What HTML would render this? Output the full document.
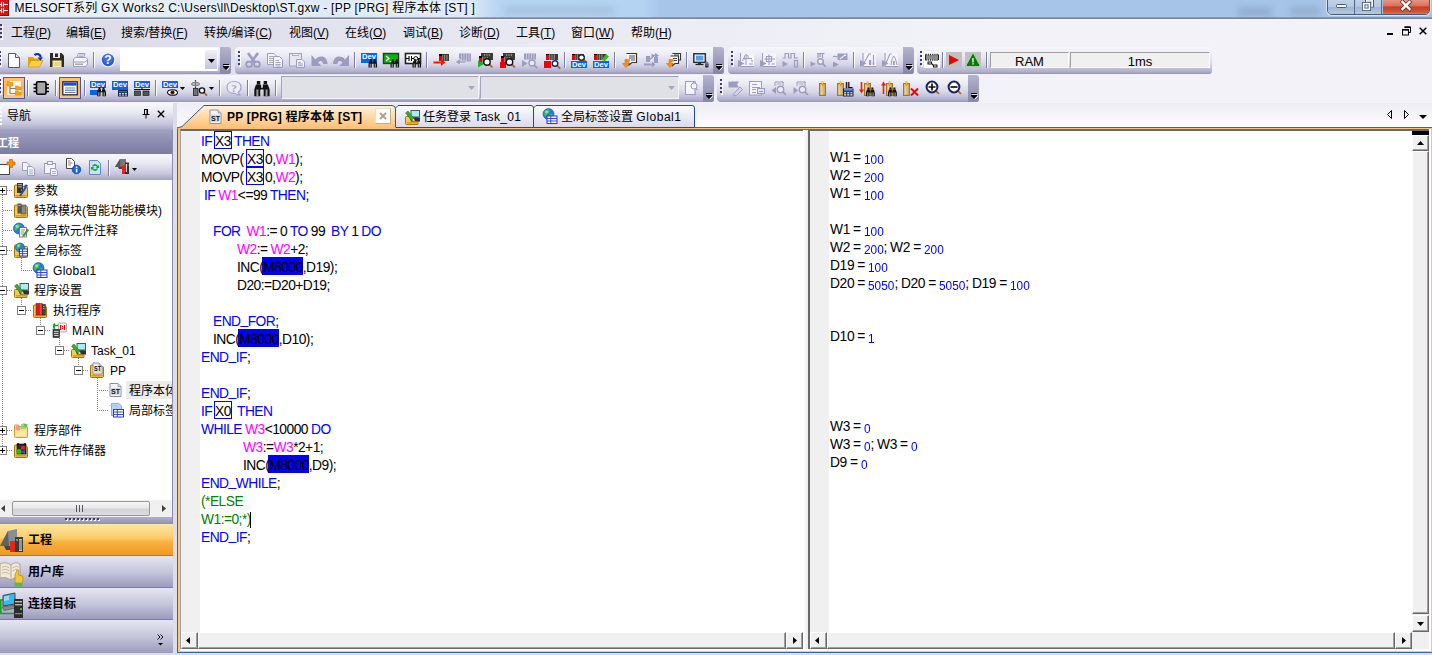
<!DOCTYPE html><html><head><meta charset="utf-8"><title>GX Works2</title><style>
*{box-sizing:border-box;margin:0;padding:0}
html,body{width:1432px;height:655px;overflow:hidden;background:#e9e9f1}
body{position:relative;font-family:"Liberation Sans","Noto Sans CJK SC",sans-serif;font-size:12px;color:#000}
.a{position:absolute}
svg{overflow:visible}
.t{position:absolute;white-space:nowrap;line-height:16px}
#title{left:0;top:0;width:1432px;height:18px;background:linear-gradient(90deg,#e6eef8 0,#dfeaf6 300px,#dce8f6 470px,#b6d4f4 500px,#b4d3f3 645px,#a6c5e9 660px,#a5c4e8 1432px)}
#titleline{left:0;top:17px;width:1432px;height:2px;background:linear-gradient(180deg,rgba(90,104,130,.25),#5e6a80)}
#menubar{left:0;top:19px;width:1432px;height:84px;background:linear-gradient(90deg,#dadae8 0,#e2e2ee 300px,#ededf5 700px,#f2f2f8 1000px,#f2f2f8 1432px)}
.menu{top:25px;font-size:12px}
.tb{position:absolute;height:27px;border-radius:0 3px 3px 0;background:linear-gradient(180deg,#f6f6fb 0,#ececf5 30%,#d4d4e6 65%,#aeaecb 92%,#9494b4 100%)}
.tb.r{border-radius:4px 3px 3px 4px}
.cap{position:absolute;top:0;bottom:0;right:0;width:11px;border-radius:0 3px 3px 0;background:linear-gradient(180deg,#b4b4ce 0,#9898b8 60%,#8686a8 100%)}
.sep{position:absolute;width:2px;height:16px;background:linear-gradient(90deg,#7c7ca4 0,#7c7ca4 50%,#fff 50%)}
.grip{position:absolute;width:2px;height:15px;background:repeating-linear-gradient(180deg,#3c3c6c 0,#3c3c6c 2px,transparent 2px,transparent 4px);box-shadow:1px 1px 0 #fff}
.code{position:absolute;white-space:pre;word-spacing:-0.3px;letter-spacing:-0.53px;font-size:13.8px;margin-top:-0.2px;line-height:18px;font-family:"Liberation Sans",sans-serif;height:18px}
.us{position:relative;top:-1.6px}.k{color:#0000ff}.v{color:#ff00ff}.g{color:#008000}
.sel{color:#000}
.mon{position:absolute;white-space:pre;word-spacing:-0.4px;letter-spacing:-0.36px;font-size:13.8px;line-height:18px;height:18px}
.mon b{font-weight:normal;color:#0000f0;display:inline-block;position:relative;top:2px;font-size:13.6px;letter-spacing:0;transform:scaleX(.87);transform-origin:0 50%}
.tree{position:absolute;white-space:nowrap;font-size:12px;line-height:16px}
.sb{position:absolute;background:#f0f0f0}
.btn{position:absolute;background:#f0f0f0;border:1px solid;border-color:#fff #696969 #696969 #fff;box-shadow:inset -1px -1px 0 #a0a0a0}
.combo{position:absolute;height:23px;background:#e0e0e7;border:1px solid;border-color:#a2a2c2 #f4f4fa #f4f4fa #a2a2c2}
.nb{position:absolute;left:0;width:173px;height:32px}
</style></head><body>
<div class="a" id="title"></div>
<div class="a" style="left:505px;top:6px;width:110px;height:9px;background:#9fb6d2;filter:blur(3px);opacity:.55"></div>
<div class="a" style="left:1238px;top:7px;width:34px;height:10px;background:#8ea6c6;filter:blur(3px);opacity:.7"></div>
<div class="a" style="left:1290px;top:6px;width:30px;height:10px;background:#8ea6c6;filter:blur(3px);opacity:.6"></div>
<div class="a" id="titleline"></div>
<div class="a" style="left:0;top:0;width:9px;height:16px;background:#d81414;border-right:1px solid #901010;border-bottom:1px solid #901010"></div>
<svg class="a" style="left:0px;top:0px" width="9" height="14" viewBox="0 0 9 14"><path d="M0,4.5 H1.5 M3.5,4.5 H8 M1.5,2 V7 M3.5,2 V7 M0,10.5 H1.5 M3.5,10.5 H8 M1.5,8 V13 M3.5,8 V13" stroke="#fff" stroke-width="1.1" fill="none"/></svg>
<div class="t" id="ttl" style="left:14.5px;top:0px;font-size:12px;line-height:17px;letter-spacing:0.26px;text-shadow:0 0 4px #fff,0 0 6px #fff">MELSOFT系列 GX Works2 C:\Users\ll\Desktop\ST.gxw - [PP [PRG] 程序本体 [ST] ]</div>
<div class="a" style="left:1327px;top:-4px;width:103px;height:19px;border:1px solid #4a5a74;border-radius:0 0 5px 5px;overflow:hidden;box-shadow:0 0 0 1px rgba(255,255,255,.55)"><div class="a" style="left:0;top:0;width:27px;height:18px;background:linear-gradient(180deg,#c4d6ec 0,#b4c8e2 55%,#9cb4d4 56%,#b8cce4 100%);border-right:1px solid #5a6a84"></div><div class="a" style="left:28px;top:0;width:26px;height:18px;background:linear-gradient(180deg,#c4d6ec 0,#b4c8e2 55%,#9cb4d4 56%,#b8cce4 100%);border-right:1px solid #5a6a84"></div><div class="a" style="left:55px;top:0;width:47px;height:18px;background:linear-gradient(180deg,#e8a898 0,#d8705c 50%,#c83c20 55%,#d05a38 85%,#e09070 100%)"></div></div>
<svg class="a" style="left:1336px;top:4px" width="11" height="4" viewBox="0 0 11 4"><rect x="0.5" y="0.5" width="10" height="3" rx="1" fill="#fff" stroke="#4c5870" stroke-width="1"/></svg>
<svg class="a" style="left:1362px;top:0px" width="12" height="12" viewBox="0 0 12 12"><rect x="3.5" y="-1" width="8" height="8" fill="none" stroke="#4c5870" stroke-width="1"/><rect x="4.5" y="0" width="6" height="6" fill="none" stroke="#fff" stroke-width="1"/><rect x="0.5" y="2.5" width="8" height="8" fill="#c0d0e4" stroke="#4c5870" stroke-width="1"/><rect x="1.5" y="3.5" width="6" height="6" fill="none" stroke="#fff" stroke-width="1.3"/><rect x="3" y="5" width="3" height="3" fill="#fff" stroke="#4c5870" stroke-width=".8"/></svg>
<svg class="a" style="left:1401px;top:1px" width="10" height="9" viewBox="0 0 10 9"><path d="M1.5,1 L8.5,8 M8.5,1 L1.5,8" stroke="#6a3a3a" stroke-width="4" stroke-linecap="square"/><path d="M1.5,1 L8.5,8 M8.5,1 L1.5,8" stroke="#fff" stroke-width="2.4" stroke-linecap="square"/></svg>
<div class="a" id="menubar"></div>
<div class="a" style="left:0;top:19px;width:1432px;height:1px;background:rgba(255,255,255,.45)"></div>
<div class="a" style="left:0;top:24px;width:2px;height:15px;background:repeating-linear-gradient(180deg,#3c3c6c 0,#3c3c6c 2px,transparent 2px,transparent 4px);box-shadow:1px 1px 0 #fff"></div>
<div class="t menu" style="left:11px">工程(<u>P</u>)</div>
<div class="t menu" style="left:66px">编辑(<u>E</u>)</div>
<div class="t menu" style="left:121px">搜索/替换(<u>F</u>)</div>
<div class="t menu" style="left:204px">转换/编译(<u>C</u>)</div>
<div class="t menu" style="left:289px">视图(<u>V</u>)</div>
<div class="t menu" style="left:345px">在线(<u>O</u>)</div>
<div class="t menu" style="left:403px">调试(<u>B</u>)</div>
<div class="t menu" style="left:459px">诊断(<u>D</u>)</div>
<div class="t menu" style="left:516px">工具(<u>T</u>)</div>
<div class="t menu" style="left:571px">窗口(<u>W</u>)</div>
<div class="t menu" style="left:631px">帮助(<u>H</u>)</div>
<svg class="a" style="left:1387px;top:26px" width="8" height="10" viewBox="0 0 8 10"><rect x="0" y="7" width="6" height="2" fill="#000"/></svg>
<svg class="a" style="left:1402px;top:26px" width="10" height="10" viewBox="0 0 10 10"><path d="M2.5,1 H8.5 V6.5 H7" fill="none" stroke="#000" stroke-width="1"/><rect x="2.5" y="0.5" width="6" height="1.5" fill="#000"/><rect x="0.5" y="3.5" width="6" height="5.5" fill="none" stroke="#000" stroke-width="1"/><rect x="0.5" y="3" width="6" height="1.6" fill="#000"/></svg>
<svg class="a" style="left:1419px;top:27px" width="8" height="8" viewBox="0 0 8 8"><path d="M0.7,0.7 L7.3,7.3 M7.3,0.7 L0.7,7.3" stroke="#000" stroke-width="1.5"/></svg>
<div class="tb" style="left:0px;top:47px;width:231px"><div class="cap"></div></div>
<svg class="a" style="left:223px;top:64px" width="7" height="7" viewBox="0 0 7 7"><rect x="0" y="0" width="6" height="1" fill="#000" shape-rendering="crispEdges"/><path d="M0,2 H6 V3 L3,6 L0,3 Z" fill="#000"/><path d="M3.7,6.2 L6.8,3.1" stroke="#fff" stroke-width="1"/><rect x="1" y="1" width="6" height="1" fill="#fff" opacity=".7" shape-rendering="crispEdges"/></svg>
<div class="grip" style="left:-1px;top:51px"></div>
<svg class="a" style="left:7px;top:52px" width="16" height="16" viewBox="0 0 16 16"><path d="M1.5,1.5 H8.5 L12.5,5.5 V15.5 H1.5 Z" fill="#fff" stroke="#5a5a5a"/><path d="M8.5,1.5 V5.5 H12.5" fill="#e8e8e8" stroke="#5a5a5a"/></svg>
<svg class="a" style="left:27px;top:52px" width="16" height="16" viewBox="0 0 16 16"><path d="M1,5 H6 L7,6.5 H12 V15 H1 Z" fill="#e8a000"/><path d="M1,15 L4,8.5 H16 L12.5,15 Z" fill="#ffd23c" stroke="#d08c00" stroke-width="0.6"/><path d="M7.5,3.2 C10,1 13.6,2 13.6,5.6" fill="none" stroke="#0032b4" stroke-width="2.2"/><path d="M10.6,5.4 H16 L13.4,8.8 Z" fill="#0032b4"/></svg>
<svg class="a" style="left:49px;top:52px" width="16" height="16" viewBox="0 0 16 16"><path d="M1,1 H12.5 L15,3.5 V15 H1 Z" fill="#2c2c24"/><rect x="4" y="1" width="7" height="5" fill="#e8e8e8"/><rect x="6" y="1.5" width="3" height="3.5" fill="#2c2c24"/><rect x="3.5" y="8.5" width="9" height="6.5" fill="#fff0a0"/><rect x="4.5" y="10.5" width="7" height="1" fill="#d4c060"/><rect x="4.5" y="12.5" width="7" height="1" fill="#d4c060"/></svg>
<svg class="a" style="left:72px;top:52px" width="16" height="16" viewBox="0 0 16 16"><path d="M4.5,6 L6.5,1.5 H13 L11.5,6" fill="#f4f4fa" stroke="#9c9cc0"/><path d="M1.5,7 L3.5,5.5 H13.5 L15.5,7 V12 L13.5,14.5 H1.5 Z" fill="#f4f4fa" stroke="#9c9cc0"/><path d="M1.5,10 H13 L15.5,8" fill="none" stroke="#9c9cc0"/><rect x="3" y="11.5" width="8" height="1.4" fill="#9c9cc0"/><line x1="7" y1="3" x2="11.5" y2="3" stroke="#9c9cc0" stroke-width=".8"/><line x1="6.5" y1="4.5" x2="11" y2="4.5" stroke="#9c9cc0" stroke-width=".8"/></svg>
<svg class="a" style="left:100px;top:52px" width="16" height="16" viewBox="0 0 16 16"><circle cx="8" cy="8" r="7.3" fill="#fff" opacity=".8"/><circle cx="8" cy="8" r="6.2" fill="#2a5cd0"/><circle cx="8" cy="6.5" r="5" fill="#4a7ce4" opacity=".6"/><text x="8" y="12.4" text-anchor="middle" font-family="Liberation Sans,sans-serif" font-weight="bold" font-size="12" fill="#fff">?</text></svg>
<div class="sep" style="left:93px;top:52px"></div>
<div class="a" style="left:120px;top:48px;width:98px;height:23px;background:#fff"></div>
<div class="a" style="left:205px;top:50px;width:12px;height:19px;background:linear-gradient(180deg,#f0f0f8,#c4c4dc)"></div>
<svg class="a" style="left:208px;top:59px" width="7" height="4" viewBox="0 0 7 4"><path d="M0,0 H7 L3.5,4 Z" fill="#000"/></svg>
<div class="tb r" style="left:235px;top:47px;width:489px"><div class="cap"></div></div>
<svg class="a" style="left:716px;top:64px" width="7" height="7" viewBox="0 0 7 7"><rect x="0" y="0" width="6" height="1" fill="#000" shape-rendering="crispEdges"/><path d="M0,2 H6 V3 L3,6 L0,3 Z" fill="#000"/><path d="M3.7,6.2 L6.8,3.1" stroke="#fff" stroke-width="1"/><rect x="1" y="1" width="6" height="1" fill="#fff" opacity=".7" shape-rendering="crispEdges"/></svg>
<div class="grip" style="left:238px;top:51px"></div>
<svg class="a" style="left:245px;top:52px" width="16" height="16" viewBox="0 0 16 16"><path d="M3,1 L10,10.5 M13,1 L6,10.5" stroke="#9c9cc0" stroke-width="2.6" fill="none"/><rect x="1.3" y="9.8" width="5.6" height="5" rx="2" fill="none" stroke="#9c9cc0" stroke-width="1.9"/><rect x="9.1" y="9.8" width="5.6" height="5" rx="2" fill="none" stroke="#9c9cc0" stroke-width="1.9"/></svg>
<svg class="a" style="left:267px;top:52px" width="16" height="16" viewBox="0 0 16 16"><path d="M0.5,1.5 H7 L10,4.5 V12.5 H0.5 Z" fill="#f4f4fa" stroke="#9c9cc0"/><path d="M2,4.5 H6 M2,6.5 H8 M2,8.5 H6 M2,10.5 H6" stroke="#9c9cc0" stroke-width=".9"/><path d="M6.5,4.5 H12.5 L15.5,7.5 V15.5 H6.5 Z" fill="#f4f4fa" stroke="#9c9cc0"/><path d="M8.5,8.5 H12 M8.5,10.5 H13.5 M8.5,12.5 H13.5 M8.5,14 H13.5" stroke="#9c9cc0" stroke-width=".9"/></svg>
<svg class="a" style="left:289px;top:52px" width="16" height="16" viewBox="0 0 16 16"><rect x="0.5" y="1.5" width="12" height="12.5" fill="#e6e6f0" stroke="#9c9cc0"/><rect x="3.5" y="1.5" width="6" height="2" fill="#f4f4fa" stroke="#9c9cc0" stroke-width=".8"/><path d="M7.5,7.5 H13 L15.5,10 V15.5 H7.5 Z" fill="#f4f4fa" stroke="#9c9cc0"/><path d="M9,10.5 H12 M9,12 H14 M9,13.7 H14" stroke="#9c9cc0" stroke-width=".9"/></svg>
<svg class="a" style="left:311px;top:52px" width="16" height="16" viewBox="0 0 16 16"><path d="M0.5,3 V14 H10.5 L7,10.8 C8.5,8 12,8.5 12,12 H16.5 C16.5,4 8.5,2.5 4.5,7.5 Z" fill="#9c9cc0"/></svg>
<svg class="a" style="left:333px;top:52px" width="16" height="16" viewBox="0 0 16 16"><path d="M16,3 V14 H6 L9.5,10.8 C8,8 4.5,8.5 4.5,12 H0 C0,4 8,2.5 12,7.5 Z" fill="#9c9cc0"/></svg>
<svg class="a" style="left:361px;top:52px" width="16" height="16" viewBox="0 0 16 16"><rect x="0" y="1" width="16" height="10" fill="#0a64e6" shape-rendering="crispEdges"/><text x="1" y="7.1" font-family="Liberation Sans,sans-serif" font-weight="bold" font-size="7.6" fill="#fff" textLength="14" lengthAdjust="spacingAndGlyphs">Dev</text><rect x="5" y="7" width="11" height="4" fill="#0a64e6" opacity="0"/><g transform="translate(7.5,7) scale(0.95)"><rect x="1.5" y="0" width="2" height="2" fill="#111"/><rect x="5.5" y="0" width="2" height="2" fill="#111"/><path d="M1,2 H4 V4 H5 V2 H8 L9,5 V9 H5.5 V5 H3.5 V9 H0 V5 Z" fill="#111"/><rect x="1.2" y="5" width="1.2" height="4" fill="#9a9a9a"/><rect x="6.6" y="5" width="1.2" height="4" fill="#9a9a9a"/></g></svg>
<svg class="a" style="left:383px;top:52px" width="16" height="16" viewBox="0 0 16 16"><rect x="0.5" y="1.5" width="15" height="10" fill="#10b010" stroke="#333" stroke-width="1.4"/><path d="M3,4 L6,6.5 L3,9 M6.5,9.5 H10" stroke="#fff" stroke-width="1.2" fill="none"/><g transform="translate(7.5,7) scale(0.95)"><rect x="1.5" y="0" width="2" height="2" fill="#111"/><rect x="5.5" y="0" width="2" height="2" fill="#111"/><path d="M1,2 H4 V4 H5 V2 H8 L9,5 V9 H5.5 V5 H3.5 V9 H0 V5 Z" fill="#111"/><rect x="1.2" y="5" width="1.2" height="4" fill="#9a9a9a"/><rect x="6.6" y="5" width="1.2" height="4" fill="#9a9a9a"/></g></svg>
<svg class="a" style="left:405px;top:52px" width="16" height="16" viewBox="0 0 16 16"><rect x="0.5" y="1.5" width="15" height="10" fill="#fff" stroke="#222" stroke-width="1.6"/><path d="M1,6.5 H4 M4,4 V9 M6.5,4 V9 M6.5,6.5 H9 M12.5,6.5 H15" stroke="#000" stroke-width="1.1"/><circle cx="10.8" cy="6.5" r="1.9" fill="#fff" stroke="#000"/><g transform="translate(7.5,7) scale(0.95)"><rect x="1.5" y="0" width="2" height="2" fill="#111"/><rect x="5.5" y="0" width="2" height="2" fill="#111"/><path d="M1,2 H4 V4 H5 V2 H8 L9,5 V9 H5.5 V5 H3.5 V9 H0 V5 Z" fill="#111"/><rect x="1.2" y="5" width="1.2" height="4" fill="#9a9a9a"/><rect x="6.6" y="5" width="1.2" height="4" fill="#9a9a9a"/></g></svg>
<svg class="a" style="left:433px;top:52px" width="16" height="16" viewBox="0 0 16 16"><rect x="5.5" y="2" width="10.5" height="6.5" fill="#3c3c34" shape-rendering="crispEdges"/><rect x="8.5" y="3" width="1.2" height="5.5" fill="#8a8a78"/><rect x="10.9" y="3" width="1.2" height="5.5" fill="#8a8a78"/><rect x="13.3" y="3" width="1.2" height="5.5" fill="#8a8a78"/><rect x="5.5" y="2" width="3" height="1.6" fill="#000" shape-rendering="crispEdges"/><rect x="5.5" y="3.6" width="3" height="4.9" fill="#e60000" shape-rendering="crispEdges"/><path d="M0.5,9.5 H8 V7 L12.5,10.5 L8,14 V11.5 H0.5 Z" fill="#f01800"/></svg>
<svg class="a" style="left:455px;top:52px" width="16" height="16" viewBox="0 0 16 16"><rect x="4" y="1.5" width="12" height="8" fill="#9c9cc0"/><path d="M6.5,2 V9 M9,2 V9 M11.5,2 V9 M14,2 V9" stroke="#c4c4dc" stroke-width="1"/><path d="M11,9 H5 V6.5 L0.5,10 L5,13.5 V11 H11 Z" fill="#9c9cc0" stroke="#f4f4fa" stroke-width=".5"/></svg>
<svg class="a" style="left:477px;top:52px" width="16" height="16" viewBox="0 0 16 16"><rect x="4" y="1" width="12" height="7" fill="#3c3c34" shape-rendering="crispEdges"/><rect x="7.0" y="2" width="1.2" height="6" fill="#8a8a78"/><rect x="9.4" y="2" width="1.2" height="6" fill="#8a8a78"/><rect x="11.8" y="2" width="1.2" height="6" fill="#8a8a78"/><rect x="2" y="4" width="11" height="7" fill="#3c3c34" shape-rendering="crispEdges"/><rect x="5.0" y="5" width="1.2" height="6" fill="#8a8a78"/><rect x="7.4" y="5" width="1.2" height="6" fill="#8a8a78"/><rect x="9.8" y="5" width="1.2" height="6" fill="#8a8a78"/><rect x="2" y="4" width="3" height="1.6" fill="#000" shape-rendering="crispEdges"/><rect x="2" y="5.6" width="3" height="5.4" fill="#e60000" shape-rendering="crispEdges"/><path d="M1,8.5 L7.5,11.8 L1,15.5 Z" fill="#10b820"/><line x1="12.24" y1="12.24" x2="15.440000000000001" y2="15.440000000000001" stroke="#b46428" stroke-width="1.8"/><circle cx="10" cy="10" r="3.2" fill="#fff" stroke="#111" stroke-width="1.4"/></svg>
<svg class="a" style="left:499px;top:52px" width="16" height="16" viewBox="0 0 16 16"><rect x="4" y="1" width="12" height="7" fill="#3c3c34" shape-rendering="crispEdges"/><rect x="7.0" y="2" width="1.2" height="6" fill="#8a8a78"/><rect x="9.4" y="2" width="1.2" height="6" fill="#8a8a78"/><rect x="11.8" y="2" width="1.2" height="6" fill="#8a8a78"/><rect x="2" y="4" width="11" height="7" fill="#3c3c34" shape-rendering="crispEdges"/><rect x="5.0" y="5" width="1.2" height="6" fill="#8a8a78"/><rect x="7.4" y="5" width="1.2" height="6" fill="#8a8a78"/><rect x="9.8" y="5" width="1.2" height="6" fill="#8a8a78"/><rect x="2" y="4" width="3" height="1.6" fill="#000" shape-rendering="crispEdges"/><rect x="2" y="5.6" width="3" height="5.4" fill="#e60000" shape-rendering="crispEdges"/><rect x="1" y="9.5" width="6" height="6" fill="#f00000" shape-rendering="crispEdges"/><line x1="12.74" y1="12.24" x2="15.940000000000001" y2="15.440000000000001" stroke="#b46428" stroke-width="1.8"/><circle cx="10.5" cy="10" r="3.2" fill="#fff" stroke="#111" stroke-width="1.4"/></svg>
<svg class="a" style="left:521px;top:52px" width="16" height="16" viewBox="0 0 16 16"><rect x="3" y="1.5" width="12" height="6" fill="#9c9cc0"/><path d="M5.5,2 V7 M8,2 V7 M10.5,2 V7 M13,2 V7" stroke="#c8c8e0" stroke-width="1"/><path d="M1,8 L6.5,11.5 L1,15 Z" fill="#9c9cc0"/><line x1="13.1" y1="13.1" x2="16.3" y2="16.3" stroke="#9c9cc0" stroke-width="1.8"/><circle cx="11" cy="11" r="3" fill="#ececf4" stroke="#9c9cc0" stroke-width="1.4"/></svg>
<svg class="a" style="left:543px;top:52px" width="16" height="16" viewBox="0 0 16 16"><rect x="3" y="1.5" width="12" height="6.5" fill="#3c3c34" shape-rendering="crispEdges"/><rect x="6.0" y="2.5" width="1.2" height="5.5" fill="#8a8a78"/><rect x="8.4" y="2.5" width="1.2" height="5.5" fill="#8a8a78"/><rect x="10.8" y="2.5" width="1.2" height="5.5" fill="#8a8a78"/><rect x="3" y="1.5" width="3" height="1.6" fill="#000" shape-rendering="crispEdges"/><rect x="3" y="3.1" width="3" height="4.9" fill="#e60000" shape-rendering="crispEdges"/><rect x="1" y="9" width="6.5" height="6.5" fill="#f00000" shape-rendering="crispEdges"/><line x1="13.959999999999999" y1="13.459999999999999" x2="17.16" y2="16.66" stroke="#b46428" stroke-width="1.8"/><circle cx="12" cy="11.5" r="2.8" fill="#fff" stroke="#1c2a6c" stroke-width="1.4"/></svg>
<svg class="a" style="left:571px;top:52px" width="16" height="16" viewBox="0 0 16 16"><rect x="0.5" y="1.5" width="12" height="6.5" fill="#3c3c34" shape-rendering="crispEdges"/><rect x="3.5" y="2.5" width="1.2" height="5.5" fill="#8a8a78"/><rect x="5.9" y="2.5" width="1.2" height="5.5" fill="#8a8a78"/><rect x="8.3" y="2.5" width="1.2" height="5.5" fill="#8a8a78"/><rect x="0.5" y="1.5" width="3" height="1.6" fill="#000" shape-rendering="crispEdges"/><rect x="0.5" y="3.1" width="3" height="4.9" fill="#e60000" shape-rendering="crispEdges"/><line x1="12.459999999999999" y1="7.46" x2="15.66" y2="10.66" stroke="#b46428" stroke-width="1.8"/><circle cx="10.5" cy="5.5" r="2.8" fill="#fff" stroke="#222" stroke-width="1.4"/><rect x="0" y="9" width="16" height="7" fill="#0a64e6" shape-rendering="crispEdges"/><text x="1" y="15.1" font-family="Liberation Sans,sans-serif" font-weight="bold" font-size="7.6" fill="#fff" textLength="14" lengthAdjust="spacingAndGlyphs">Dev</text></svg>
<svg class="a" style="left:593px;top:52px" width="16" height="16" viewBox="0 0 16 16"><rect x="0.5" y="1.5" width="12" height="6.5" fill="#3c3c34" shape-rendering="crispEdges"/><rect x="3.5" y="2.5" width="1.2" height="5.5" fill="#8a8a78"/><rect x="5.9" y="2.5" width="1.2" height="5.5" fill="#8a8a78"/><rect x="8.3" y="2.5" width="1.2" height="5.5" fill="#8a8a78"/><rect x="0.5" y="1.5" width="3" height="1.6" fill="#000" shape-rendering="crispEdges"/><rect x="0.5" y="3.1" width="3" height="4.9" fill="#e60000" shape-rendering="crispEdges"/><path d="M9,7.5 L13,2 L16,4.5 L11.5,9.5 Z" fill="#30c020"/><path d="M9,7.5 L11.5,9.5 L8.5,10 Z" fill="#e8c040"/><rect x="0" y="9" width="16" height="7" fill="#0a64e6" shape-rendering="crispEdges"/><text x="1" y="15.1" font-family="Liberation Sans,sans-serif" font-weight="bold" font-size="7.6" fill="#fff" textLength="14" lengthAdjust="spacingAndGlyphs">Dev</text></svg>
<svg class="a" style="left:621px;top:52px" width="16" height="16" viewBox="0 0 16 16"><path d="M5.5,1.5 H15.5 V10.5 H11 L8,13 V10.5" fill="#fff" stroke="#333" stroke-width="1.2"/><path d="M8,4 H14 M8,6 H14 M10,8 H14" stroke="#333" stroke-width=".9"/><path d="M8.5,7.5 H4 V11.5 H1.5 L5,15.5 L8.5,11.5 H6 V9.5 H8.5 Z" fill="#ff8c00" stroke="#e06000" stroke-width=".5"/></svg>
<svg class="a" style="left:643px;top:52px" width="16" height="16" viewBox="0 0 16 16"><rect x="3" y="4" width="4" height="6" fill="#9c9cc0"/><rect x="11" y="5" width="4" height="6" fill="#9c9cc0"/><path d="M8.5,1.5 L12,3.5 L8.5,6 Z M12,1 L16,3.5 L12,6 Z" fill="#9c9cc0"/><path d="M5,9 L12,3" stroke="#9c9cc0" stroke-width="1.2"/><path d="M1,11.5 H9 V9.5 L12.5,12.5 L9,15.5 V13.5 H1 Z" fill="#9c9cc0"/></svg>
<svg class="a" style="left:665px;top:52px" width="16" height="16" viewBox="0 0 16 16"><path d="M7.5,1.5 H15.5 V8 H14" fill="#fff" stroke="#333" stroke-width="1.1"/><path d="M5.5,4 H13.5 V11.5 H10 L7.5,13.5 V11.5" fill="#fff" stroke="#333" stroke-width="1.1"/><path d="M9,3 H14 M8,6.5 H12 M9,8.5 H12" stroke="#333" stroke-width=".9"/><path d="M8.5,7.5 H4 V11.5 H1.5 L5,15.5 L8.5,11.5 H6 V9.5 H8.5 Z" fill="#ff8c00" stroke="#e06000" stroke-width=".5"/></svg>
<svg class="a" style="left:693px;top:52px" width="16" height="16" viewBox="0 0 16 16"><rect x="0.8" y="1.8" width="11.5" height="8.5" fill="#fff" stroke="#333" stroke-width="1.5"/><rect x="2.8" y="3.6" width="7.5" height="5" fill="#4aa0ff"/><rect x="5" y="10.5" width="3" height="1.5" fill="#333"/><rect x="2.5" y="11.8" width="8" height="1.3" fill="#222"/><path d="M12,11.5 H15.5 V15 Q13.7,16.3 12,15 Z" fill="#333"/><path d="M12.8,11.5 V10.5 Q13.7,9.3 14.7,10.5 V11.5" fill="none" stroke="#555" stroke-width=".9"/><rect x="12" y="12.6" width="3.5" height=".8" fill="#999"/></svg>
<div class="sep" style="left:354px;top:52px"></div>
<div class="sep" style="left:426px;top:52px"></div>
<div class="sep" style="left:564px;top:52px"></div>
<div class="sep" style="left:614px;top:52px"></div>
<div class="sep" style="left:686px;top:52px"></div>
<div class="tb r" style="left:728px;top:47px;width:186px"><div class="cap"></div></div>
<svg class="a" style="left:906px;top:64px" width="7" height="7" viewBox="0 0 7 7"><rect x="0" y="0" width="6" height="1" fill="#000" shape-rendering="crispEdges"/><path d="M0,2 H6 V3 L3,6 L0,3 Z" fill="#000"/><path d="M3.7,6.2 L6.8,3.1" stroke="#fff" stroke-width="1"/><rect x="1" y="1" width="6" height="1" fill="#fff" opacity=".7" shape-rendering="crispEdges"/></svg>
<div class="grip" style="left:731px;top:51px"></div>
<svg class="a" style="left:738px;top:52px" width="16" height="16" viewBox="0 0 16 16"><rect x="2.5" y="1" width="13.5" height="14" fill="#f6f4f8"/><path d="M2.5,1 V15 M2.5,14.5 H16" stroke="#9c9cc0" stroke-width="1.1" fill="none"/><path d="M4,8 Q5.5,9 6.5,7 M8,2.5 V13 M5,6.5 H14 M8,2.5 Q10.5,3 10.5,6.5 M8,2.5 Q6,3 6,6.5 M13,8 Q15,8 14,10 M11,12 H15" stroke="#9c9cc0" stroke-width="1" fill="none"/><path d="M0,8 L6.5,11.5 L0,15 Z" fill="#9c9cc0"/></svg>
<svg class="a" style="left:760px;top:52px" width="16" height="16" viewBox="0 0 16 16"><rect x="2.5" y="1" width="13.5" height="14" fill="#f6f4f8"/><path d="M2.5,1 V15 M2.5,14.5 H16" stroke="#9c9cc0" stroke-width="1.1" fill="none"/><path d="M9,2.5 V13 M4.5,7 H15 M6.5,4.5 H11.5 V9.5 H6.5 Z M11.5,12 H15" stroke="#9c9cc0" stroke-width="1.1" fill="none"/><path d="M0,8 L6.5,11.5 L0,15 Z" fill="#9c9cc0"/></svg>
<svg class="a" style="left:782px;top:52px" width="16" height="16" viewBox="0 0 16 16"><path d="M0.5,6 H3 V1.5 H6.5 V6 H9 V1.5 H12.5 V6 H16" stroke="#9c9cc0" stroke-width="1.2" fill="none"/><rect x="12.5" y="8.5" width="3" height="6.5" fill="none" stroke="#9c9cc0" stroke-width="1.2"/><path d="M0.5,9 L6,12 L0.5,15 Z" fill="#9c9cc0"/></svg>
<svg class="a" style="left:810px;top:52px" width="16" height="16" viewBox="0 0 16 16"><path d="M7,1.5 H14.5 M8,1.5 V6 M12.5,1.5 V6 M10,2 V5" stroke="#9c9cc0" stroke-width="1.2"/><line x1="12.459999999999999" y1="11.459999999999999" x2="15.66" y2="14.66" stroke="#9c9cc0" stroke-width="1.8"/><circle cx="10.5" cy="9.5" r="2.8" fill="#ececf4" stroke="#9c9cc0" stroke-width="1.4"/><path d="M0.5,9.5 L6,12 L0.5,14.5 Z" fill="#9c9cc0"/></svg>
<svg class="a" style="left:832px;top:52px" width="16" height="16" viewBox="0 0 16 16"><rect x="5.5" y="1.5" width="10" height="6.5" fill="#9c9cc0"/><path d="M8,7 L13,3" stroke="#e8e8f4" stroke-width="1.2"/><rect x="12.5" y="2.5" width="1.3" height="1.6" fill="#fff"/><path d="M1,4.5 H5.5" stroke="#9c9cc0" stroke-width="1.2"/><path d="M1,9.5 L7,12.5 L1,15.5 Z" fill="#9c9cc0"/></svg>
<svg class="a" style="left:860px;top:52px" width="16" height="16" viewBox="0 0 16 16"><rect x="2.5" y="1" width="13.5" height="14" fill="#f6f4f8"/><path d="M3,1 V15 M3,14.5 H16" stroke="#9c9cc0" stroke-width="1.1" fill="none"/><path d="M4,11 L9,2 H11 M13.5,3 V12" stroke="#9c9cc0" stroke-width="1.1" fill="none"/><rect x="9" y="8" width="2.2" height="5" fill="#9c9cc0"/><rect x="12.7" y="10" width="1.6" height="3" fill="#9c9cc0"/><path d="M0,8 L6.5,11.5 L0,15 Z" fill="#9c9cc0"/></svg>
<svg class="a" style="left:882px;top:52px" width="16" height="16" viewBox="0 0 16 16"><rect x="2.5" y="1" width="13.5" height="14" fill="#f6f4f8"/><path d="M3,1 V15 M3,14.5 H16" stroke="#9c9cc0" stroke-width="1.1" fill="none"/><path d="M4,11 L8,2 H9.5 M9,13 Q11.5,-4 15,13" stroke="#9c9cc0" stroke-width="1.1" fill="none"/><rect x="11" y="9" width="1.8" height="4" fill="#9c9cc0"/><path d="M0,8 L6.5,11.5 L0,15 Z" fill="#9c9cc0"/></svg>
<div class="sep" style="left:803px;top:52px"></div>
<div class="sep" style="left:853px;top:52px"></div>
<div class="tb r" style="left:917px;top:47px;width:295px"></div>
<div class="grip" style="left:920px;top:51px"></div>
<svg class="a" style="left:924px;top:52px" width="16" height="16" viewBox="0 0 16 16"><rect x="0" y="0" width="16" height="16" fill="#fff" shape-rendering="crispEdges"/><rect x="2" y="3" width="12" height="4.5" fill="#8c8c8c"/><path d="M1.5,2.5 H14.5 M1.5,8 H14.5" stroke="#222" stroke-width="1.4" stroke-dasharray="1.2,1"/><path d="M1.5,2.5 V8 M14.5,2.5 V8" stroke="#222" stroke-width="1"/><rect x="4" y="10" width="3.5" height="2" fill="none" stroke="#111" stroke-width="1"/><rect x="9.5" y="13" width="3.5" height="2" fill="none" stroke="#111" stroke-width="1"/><path d="M7.5,11 L9.5,14" stroke="#111"/></svg>
<svg class="a" style="left:946px;top:52px" width="16" height="16" viewBox="0 0 16 16"><rect x="0" y="0" width="16" height="16" fill="#c0c0c0" shape-rendering="crispEdges"/><path d="M3,3 L13,8 L3,13 Z" fill="#f00000"/></svg>
<svg class="a" style="left:965px;top:52px" width="16" height="16" viewBox="0 0 16 16"><rect x="0" y="0" width="16" height="16" fill="#c0c0c0" shape-rendering="crispEdges"/><path d="M8,2.5 L14,13.5 H2 Z" fill="#008000" stroke="#008000" stroke-linejoin="round"/><rect x="7.3" y="6" width="1.4" height="4.5" fill="#e8ffe8"/><rect x="7.3" y="11.2" width="1.4" height="1.3" fill="#e8ffe8"/></svg>
<div class="sep" style="left:942px;top:52px"></div>
<div class="sep" style="left:986px;top:52px"></div>
<div class="a" style="left:990px;top:52px;width:79px;height:16px;background:#f0f0f0;border:1px solid;border-color:#a0a0a0 #fff #fff #a0a0a0;text-align:center;font-size:13px;line-height:17px">RAM</div>
<div class="a" style="left:1070px;top:52px;width:140px;height:16px;background:#f0f0f0;border:1px solid;border-color:#a0a0a0 #fff #fff #a0a0a0;text-align:center;font-size:13px;line-height:17px">1ms</div>
<div class="tb" style="left:0px;top:75px;width:714px"><div class="cap"></div></div>
<svg class="a" style="left:706px;top:93px" width="7" height="7" viewBox="0 0 7 7"><rect x="0" y="0" width="6" height="1" fill="#000" shape-rendering="crispEdges"/><path d="M0,2 H6 V3 L3,6 L0,3 Z" fill="#000"/><path d="M3.7,6.2 L6.8,3.1" stroke="#fff" stroke-width="1"/><rect x="1" y="1" width="6" height="1" fill="#fff" opacity=".7" shape-rendering="crispEdges"/></svg>
<div class="grip" style="left:-1px;top:79px"></div>
<div class="a" style="left:3px;top:77px;width:22px;height:22px;background:linear-gradient(180deg,#ffc478,#ffb050 50%,#ffc880);border:1px solid #4a5a9c"></div>
<div class="a" style="left:59px;top:77px;width:22px;height:22px;background:linear-gradient(180deg,#ffc478,#ffb050 50%,#ffc880);border:1px solid #4a5a9c"></div>
<svg class="a" style="left:6px;top:80px" width="16" height="16" viewBox="0 0 16 16"><rect x="1" y="1" width="14" height="14" fill="#fff" opacity=".85"/><path d="M4,5 V13.5 H10 M4,8.5 H10" stroke="#808080" stroke-width="1.2" fill="none"/><path d="M1,2.5 V1.5 H3.5 L4.5,2.5 H7 V6 H1 Z" fill="#f0a818" stroke="#c88000" stroke-width=".5"/><path d="M9.5,7 V6 H12 L13,7 H15 V10 H9.5 Z" fill="#f0a818" stroke="#c88000" stroke-width=".5"/><path d="M9.5,12 V11 H12 L13,12 H15 V15 H9.5 Z" fill="#f0a818" stroke="#c88000" stroke-width=".5"/></svg>
<svg class="a" style="left:33px;top:80px" width="16" height="16" viewBox="0 0 16 16"><path d="M0.5,4.5 H16 M0.5,8 H16 M0.5,11.5 H16" stroke="#000" stroke-width="1.7"/><rect x="3.5" y="1.8" width="9.5" height="12.5" rx="1.5" fill="#a8a8a8" stroke="#000" stroke-width="1.6"/></svg>
<svg class="a" style="left:62px;top:80px" width="16" height="16" viewBox="0 0 16 16"><rect x="0.8" y="1.8" width="14.5" height="13" fill="#fff" stroke="#1c2c5c" stroke-width="1.3"/><rect x="1.5" y="2.5" width="13" height="3.2" fill="#1c50d8"/><path d="M3,8 H13.5 M3,12.5 H13.5" stroke="#808080" stroke-width="1"/><path d="M3,10.2 H13.5" stroke="#2860e8" stroke-width="1"/></svg>
<svg class="a" style="left:90px;top:80px" width="16" height="16" viewBox="0 0 16 16"><rect x="0" y="1" width="16" height="6.5" fill="#0a64e6" shape-rendering="crispEdges"/><text x="1" y="6.6" font-family="Liberation Sans,sans-serif" font-weight="bold" font-size="7.6" fill="#fff" textLength="14" lengthAdjust="spacingAndGlyphs">Dev</text><rect x="0" y="10" width="8" height="5" fill="#0a64e6" shape-rendering="crispEdges"/><path d="M5,10 L7.5,12.5 L5,15 H8 V10Z" fill="#fff" opacity=".0"/><g transform="translate(7,7.2) scale(1.0)"><rect x="1.5" y="0" width="2" height="2" fill="#111"/><rect x="5.5" y="0" width="2" height="2" fill="#111"/><path d="M1,2 H4 V4 H5 V2 H8 L9,5 V9 H5.5 V5 H3.5 V9 H0 V5 Z" fill="#111"/><rect x="1.2" y="5" width="1.2" height="4" fill="#9a9a9a"/><rect x="6.6" y="5" width="1.2" height="4" fill="#9a9a9a"/></g></svg>
<svg class="a" style="left:112px;top:80px" width="16" height="16" viewBox="0 0 16 16"><rect x="0" y="1" width="16" height="8.5" fill="#0a64e6" shape-rendering="crispEdges"/><text x="1" y="7.1" font-family="Liberation Sans,sans-serif" font-weight="bold" font-size="7.6" fill="#fff" textLength="14" lengthAdjust="spacingAndGlyphs">Dev</text><rect x="6.5" y="10.5" width="9" height="5.5" fill="#fff" stroke="#1c2440" stroke-width="1"/><rect x="7" y="11" width="8" height="1.6" fill="#2a6cf0" shape-rendering="crispEdges"/><path d="M9.5,12.6 V16 M12.5,12.6 V16 M6.5,14.3 H15.5 M6.5,12.6 H15.5" stroke="#1c2440" stroke-width=".8"/></svg>
<svg class="a" style="left:134px;top:80px" width="16" height="16" viewBox="0 0 16 16"><rect x="0" y="1" width="16" height="6.5" fill="#0a64e6" shape-rendering="crispEdges"/><text x="1" y="6.6" font-family="Liberation Sans,sans-serif" font-weight="bold" font-size="7.6" fill="#fff" textLength="14" lengthAdjust="spacingAndGlyphs">Dev</text><path d="M8,7.5 V9.5 M0,9.5 H16" stroke="#111" stroke-width="1.1"/><rect x="0.5" y="11" width="6" height="4.5" fill="#555" stroke="#222" stroke-width=".7"/><rect x="9" y="11" width="6" height="4.5" fill="#555" stroke="#222" stroke-width=".7"/></svg>
<svg class="a" style="left:162px;top:80px" width="16" height="16" viewBox="0 0 16 16"><rect x="0" y="1" width="16" height="6.5" fill="#0a64e6" shape-rendering="crispEdges"/><text x="1" y="6.6" font-family="Liberation Sans,sans-serif" font-weight="bold" font-size="7.6" fill="#fff" textLength="14" lengthAdjust="spacingAndGlyphs">Dev</text><ellipse cx="10.5" cy="12.5" rx="5" ry="2.8" fill="#fff" stroke="#111" stroke-width="1.1"/><circle cx="10.5" cy="12.5" r="2.1" fill="#6c1400"/><circle cx="10.5" cy="12.5" r=".9" fill="#000"/></svg>
<svg class="a" style="left:191px;top:80px" width="16" height="16" viewBox="0 0 16 16"><ellipse cx="4.5" cy="4" rx="4" ry="1.8" fill="none" stroke="#666" stroke-width=".8"/><path d="M4.5,0.5 V8 M0.5,4 H8.5" stroke="#666" stroke-width=".8"/><circle cx="4.5" cy="0.8" r=".7" fill="#800080"/><circle cx="4.5" cy="7.5" r=".7" fill="#800080"/><rect x="2.5" y="8.5" width="4.5" height="7" fill="#70706c" stroke="#222" stroke-width=".8"/><line x1="12.82" y1="12.32" x2="16.02" y2="15.52" stroke="#b46428" stroke-width="1.8"/><circle cx="11" cy="10.5" r="2.6" fill="#fff" stroke="#111" stroke-width="1.4"/></svg>
<svg class="a" style="left:226px;top:80px" width="16" height="16" viewBox="0 0 16 16"><path d="M8,1.5 C12.5,1.5 15,4 15,7.5 C15,10 13.5,11.5 12,12.3 C12.5,13.5 13.5,14.5 14,15 C11.5,15 10,14.3 9,13.3 C4,13.8 1,11 1,7.5 C1,4 3.5,1.5 8,1.5 Z" fill="#ececf6" stroke="#a4a4c6" stroke-width="1.2"/><text x="8" y="11.6" text-anchor="middle" font-family="Liberation Serif,serif" font-weight="bold" font-size="11" fill="#a0a0c4">?</text></svg>
<svg class="a" style="left:254px;top:80px" width="16" height="16" viewBox="0 0 16 16"><g transform="translate(0.3,1) scale(1.7)"><rect x="1.5" y="0" width="2" height="2" fill="#111"/><rect x="5.5" y="0" width="2" height="2" fill="#111"/><path d="M1,2 H4 V4 H5 V2 H8 L9,5 V9 H5.5 V5 H3.5 V9 H0 V5 Z" fill="#111"/><rect x="1.2" y="5" width="1.2" height="4" fill="#9a9a9a"/><rect x="6.6" y="5" width="1.2" height="4" fill="#9a9a9a"/></g></svg>
<svg class="a" style="left:685px;top:80px" width="16" height="16" viewBox="0 0 16 16"><path d="M0.5,1.5 H10 V6 M0.5,1.5 V14.5 H10 V11" fill="#f4f4fa" stroke="#9c9cc0"/><rect x="0.5" y="1.5" width="9.5" height="13" fill="#f4f4fa" stroke="#9c9cc0"/><circle cx="9" cy="6" r="3" fill="#f4f4fa" stroke="#9c9cc0" stroke-width="1"/><path d="M11,8.5 L12.5,10" stroke="#9c9cc0" stroke-width="1.2"/><path d="M8.5,2 V3" stroke="#9c9cc0"/></svg>
<div class="sep" style="left:27px;top:80px"></div>
<div class="sep" style="left:55px;top:80px"></div>
<div class="sep" style="left:84px;top:80px"></div>
<div class="sep" style="left:155px;top:80px"></div>
<div class="sep" style="left:219px;top:80px"></div>
<div class="sep" style="left:247px;top:80px"></div>
<div class="sep" style="left:275px;top:80px"></div>
<svg class="a" style="left:180px;top:87px" width="5" height="3" viewBox="0 0 5 3"><path d="M0,0 H5 L2.5,3 Z" fill="#000"/></svg>
<svg class="a" style="left:209px;top:87px" width="5" height="3" viewBox="0 0 5 3"><path d="M0,0 H5 L2.5,3 Z" fill="#000"/></svg>
<div class="combo" style="left:281px;top:76px;width:198px"></div>
<div class="combo" style="left:480px;top:76px;width:199px"></div>
<svg class="a" style="left:468px;top:86px" width="7" height="4" viewBox="0 0 7 4"><path d="M0,0 H7 L3.5,4 Z" fill="#a4a4c4"/></svg>
<svg class="a" style="left:668px;top:86px" width="7" height="4" viewBox="0 0 7 4"><path d="M0,0 H7 L3.5,4 Z" fill="#a4a4c4"/></svg>
<div class="tb r" style="left:717px;top:75px;width:262px"><div class="cap"></div></div>
<svg class="a" style="left:971px;top:93px" width="7" height="7" viewBox="0 0 7 7"><rect x="0" y="0" width="6" height="1" fill="#000" shape-rendering="crispEdges"/><path d="M0,2 H6 V3 L3,6 L0,3 Z" fill="#000"/><path d="M3.7,6.2 L6.8,3.1" stroke="#fff" stroke-width="1"/><rect x="1" y="1" width="6" height="1" fill="#fff" opacity=".7" shape-rendering="crispEdges"/></svg>
<div class="grip" style="left:720px;top:79px"></div>
<svg class="a" style="left:728px;top:80px" width="16" height="16" viewBox="0 0 16 16"><path d="M0.5,1.5 H11 L9,4.5 L11,7.5 H0.5 Z" fill="#9c9cc0"/><path d="M6,13.5 L12,7 L14.5,9.5 L8.5,15.5 L5.5,15.8 Z" fill="#d4d4e4" stroke="#9c9cc0" stroke-width="1"/></svg>
<svg class="a" style="left:749px;top:80px" width="16" height="16" viewBox="0 0 16 16"><rect x="0.5" y="1.5" width="12" height="13.5" fill="#f4f4fa" stroke="#9c9cc0"/><path d="M2.5,4.5 H8 M2.5,7 H10.5 M2.5,9.5 H7 M2.5,12 H7" stroke="#9c9cc0" stroke-width="1" shape-rendering="crispEdges"/><rect x="8.5" y="8.5" width="7" height="5" fill="#e4e4f0" stroke="#9c9cc0"/><path d="M10,11 H13.5" stroke="#9c9cc0" stroke-width="1" shape-rendering="crispEdges"/></svg>
<svg class="a" style="left:771px;top:80px" width="16" height="16" viewBox="0 0 16 16"><path d="M4,2 H12 V6 M4,2 V6" fill="none" stroke="#9c9cc0" stroke-width="1"/><path d="M5.5,4 H10.5 M11,1 L13,3" stroke="#9c9cc0" stroke-width=".8"/><line x1="11.74" y1="11.74" x2="14.940000000000001" y2="14.940000000000001" stroke="#9c9cc0" stroke-width="1.8"/><circle cx="9.5" cy="9.5" r="3.2" fill="#ececf4" stroke="#9c9cc0" stroke-width="1.4"/><path d="M5,7 L0.5,10.5 L5,14 Z" fill="#9c9cc0"/></svg>
<svg class="a" style="left:793px;top:80px" width="16" height="16" viewBox="0 0 16 16"><path d="M4,2 H12 V6 M4,2 V6" fill="none" stroke="#9c9cc0" stroke-width="1"/><path d="M5.5,4 H10.5 M11,1 L13,3" stroke="#9c9cc0" stroke-width=".8"/><line x1="11.74" y1="11.74" x2="14.940000000000001" y2="14.940000000000001" stroke="#9c9cc0" stroke-width="1.8"/><circle cx="9.5" cy="9.5" r="3.2" fill="#ececf4" stroke="#9c9cc0" stroke-width="1.4"/><path d="M0.5,7 L5,10.5 L0.5,14 Z" fill="#9c9cc0"/></svg>
<svg class="a" style="left:815px;top:80px" width="16" height="16" viewBox="0 0 16 16"><rect x="4.6" y="3.6" width="5.8" height="11.8" fill="#d8b878" stroke="#a07820" stroke-width="1.2"/><rect x="5.4" y="4.4" width="2" height="10.4" fill="#ecd8a8" opacity=".7"/><path d="M6.7,1 H8.3 V6 H6.7 Z" fill="#ff9000"/><path d="M7.1,1 H7.9 V4 H7.1Z" fill="#ffd060"/></svg>
<svg class="a" style="left:837px;top:80px" width="16" height="16" viewBox="0 0 16 16"><rect x="0.6" y="3.6" width="5.8" height="11.8" fill="#d8b878" stroke="#a07820" stroke-width="1.2"/><rect x="1.4" y="4.4" width="2" height="10.4" fill="#ecd8a8" opacity=".7"/><path d="M2.7,1 H4.3 V6 H2.7 Z" fill="#ff9000"/><path d="M3.1,1 H3.9 V4 H3.1Z" fill="#ffd060"/><text x="8.2" y="7.6" font-family="Liberation Sans,sans-serif" font-weight="bold" font-size="8.5" fill="#000" textLength="7.6" lengthAdjust="spacingAndGlyphs">IL</text><rect x="6.5" y="9" width="9.5" height="7" fill="#fff" stroke="#1c2440" stroke-width="1"/><rect x="7" y="9.5" width="8.5" height="2.3" fill="#2a6cf0" shape-rendering="crispEdges"/><path d="M9.7,11.8 V16 M12.8,11.8 V16 M6.5,13.8 H16 M6.5,11.8 H16" stroke="#1c2440" stroke-width=".9"/></svg>
<svg class="a" style="left:859px;top:80px" width="16" height="16" viewBox="0 0 16 16"><rect x="5.6" y="3.6" width="5.8" height="11.8" fill="#d8b878" stroke="#a07820" stroke-width="1.2"/><rect x="6.4" y="4.4" width="2" height="10.4" fill="#ecd8a8" opacity=".7"/><path d="M7.7,1 H9.3 V6 H7.7 Z" fill="#ff9000"/><path d="M8.1,1 H8.9 V4 H8.1Z" fill="#ffd060"/><path d="M2.5,2 V11" stroke="#f02000" stroke-width="1.6"/><path d="M0,9.5 H5 L2.5,13.5 Z" fill="#f02000"/><g transform="translate(7,7.5) scale(0.98)"><rect x="1.5" y="0" width="2" height="2" fill="#111"/><rect x="5.5" y="0" width="2" height="2" fill="#111"/><path d="M1,2 H4 V4 H5 V2 H8 L9,5 V9 H5.5 V5 H3.5 V9 H0 V5 Z" fill="#111"/><rect x="1.2" y="5" width="1.2" height="4" fill="#9a9a9a"/><rect x="6.6" y="5" width="1.2" height="4" fill="#9a9a9a"/></g></svg>
<svg class="a" style="left:881px;top:80px" width="16" height="16" viewBox="0 0 16 16"><rect x="5.6" y="3.6" width="5.8" height="11.8" fill="#d8b878" stroke="#a07820" stroke-width="1.2"/><rect x="6.4" y="4.4" width="2" height="10.4" fill="#ecd8a8" opacity=".7"/><path d="M7.7,1 H9.3 V6 H7.7 Z" fill="#ff9000"/><path d="M8.1,1 H8.9 V4 H8.1Z" fill="#ffd060"/><path d="M2.5,4 V14" stroke="#f02000" stroke-width="1.6"/><path d="M0,5.5 H5 L2.5,1.5 Z" fill="#f02000"/><g transform="translate(7,7.5) scale(0.98)"><rect x="1.5" y="0" width="2" height="2" fill="#111"/><rect x="5.5" y="0" width="2" height="2" fill="#111"/><path d="M1,2 H4 V4 H5 V2 H8 L9,5 V9 H5.5 V5 H3.5 V9 H0 V5 Z" fill="#111"/><rect x="1.2" y="5" width="1.2" height="4" fill="#9a9a9a"/><rect x="6.6" y="5" width="1.2" height="4" fill="#9a9a9a"/></g></svg>
<svg class="a" style="left:903px;top:80px" width="16" height="16" viewBox="0 0 16 16"><rect x="0.6" y="3.6" width="5.8" height="11.8" fill="#d8b878" stroke="#a07820" stroke-width="1.2"/><rect x="1.4" y="4.4" width="2" height="10.4" fill="#ecd8a8" opacity=".7"/><path d="M2.7,1 H4.3 V6 H2.7 Z" fill="#ff9000"/><path d="M3.1,1 H3.9 V4 H3.1Z" fill="#ffd060"/><path d="M8,8.5 L15,15.5 M15,8.5 L8,15.5" stroke="#f00000" stroke-width="1.8"/></svg>
<svg class="a" style="left:925px;top:80px" width="16" height="16" viewBox="0 0 16 16"><line x1="10.78" y1="10.78" x2="13.98" y2="13.98" stroke="#b46428" stroke-width="1.8"/><circle cx="7" cy="7" r="5.4" fill="#fff" stroke="#1c2460" stroke-width="2"/><path d="M3.5,7 H10.5 M7,3.5 V10.5" stroke="#111" stroke-width="1.7"/></svg>
<svg class="a" style="left:947px;top:80px" width="16" height="16" viewBox="0 0 16 16"><line x1="10.78" y1="10.78" x2="13.98" y2="13.98" stroke="#b46428" stroke-width="1.8"/><circle cx="7" cy="7" r="5.4" fill="#fff" stroke="#1c2460" stroke-width="2"/><path d="M3.5,7 H10.5" stroke="#111" stroke-width="1.7"/></svg>
<div class="a" style="left:0;top:102px;width:1432px;height:2px;background:#f4f4f9"></div>
<div class="a" style="left:0;top:103px;width:173px;height:27px;background:linear-gradient(180deg,#f8f8fc 0,#e8e8f2 35%,#c8c8de 75%,#a8a8c6 100%)"></div>
<div class="a" style="left:0;top:107px;width:2px;height:19px;background:repeating-linear-gradient(180deg,#fff 0,#fff 2px,transparent 2px,transparent 4px)"></div>
<div class="t" style="left:7px;top:108px">导航</div>
<svg class="a" style="left:142px;top:109px" width="8" height="10" viewBox="0 0 8 10"><path d="M2,0.5 H6 M2.5,0.5 V5 M5.5,0.5 V5 M0.5,5.5 H7.5 M4,5.5 V9.5" stroke="#000" stroke-width="1" fill="none"/><rect x="4.5" y="1" width="1.5" height="4.5" fill="#000"/></svg>
<svg class="a" style="left:157px;top:110px" width="8" height="8" viewBox="0 0 8 8"><path d="M0.8,0.8 L7.2,7.2 M7.2,0.8 L0.8,7.2" stroke="#000" stroke-width="1.4"/></svg>
<div class="a" style="left:0;top:130px;width:173px;height:24px;background:linear-gradient(180deg,#a2a2c4 0,#8e8eb2 45%,#7c7ca2 100%)"></div>
<div class="t" style="left:-3px;top:135px;color:#fff;font-weight:bold;font-size:11px">工程</div>
<div class="a" style="left:0;top:154px;width:173px;height:26px;background:linear-gradient(180deg,#f8f8fc 0,#e8e8f2 35%,#c8c8de 75%,#a4a4c2 100%)"></div>
<div class="a" style="left:0;top:180px;width:173px;height:320px;background:#fff"></div>
<div class="a" style="left:173px;top:103px;width:4px;height:552px;background:#dcdcec"></div>
<div class="a" style="left:172px;top:130px;width:1px;height:523px;background:#8c8cb0"></div>
<div class="a" id="treebox" style="left:0;top:180px;width:172px;height:320px;overflow:hidden">
<div class="a" style="left:126px;top:201px;width:60px;height:18px;background:#ececec"></div>
<div class="a" style="left:2px;top:15px;width:1px;height:256px;background:repeating-linear-gradient(180deg,#808080 0,#808080 1px,transparent 1px,transparent 2px)"></div>
<div class="a" style="left:3px;top:10px;width:10px;height:1px;background:repeating-linear-gradient(90deg,#808080 0,#808080 1px,transparent 1px,transparent 2px)"></div>
<div class="a" style="left:3px;top:30px;width:10px;height:1px;background:repeating-linear-gradient(90deg,#808080 0,#808080 1px,transparent 1px,transparent 2px)"></div>
<div class="a" style="left:3px;top:50px;width:10px;height:1px;background:repeating-linear-gradient(90deg,#808080 0,#808080 1px,transparent 1px,transparent 2px)"></div>
<div class="a" style="left:3px;top:70px;width:10px;height:1px;background:repeating-linear-gradient(90deg,#808080 0,#808080 1px,transparent 1px,transparent 2px)"></div>
<div class="a" style="left:3px;top:110px;width:10px;height:1px;background:repeating-linear-gradient(90deg,#808080 0,#808080 1px,transparent 1px,transparent 2px)"></div>
<div class="a" style="left:3px;top:250px;width:10px;height:1px;background:repeating-linear-gradient(90deg,#808080 0,#808080 1px,transparent 1px,transparent 2px)"></div>
<div class="a" style="left:3px;top:270px;width:10px;height:1px;background:repeating-linear-gradient(90deg,#808080 0,#808080 1px,transparent 1px,transparent 2px)"></div>
<div class="a" style="left:21px;top:78px;width:1px;height:13px;background:repeating-linear-gradient(180deg,#808080 0,#808080 1px,transparent 1px,transparent 2px)"></div>
<div class="a" style="left:21px;top:90px;width:11px;height:1px;background:repeating-linear-gradient(90deg,#808080 0,#808080 1px,transparent 1px,transparent 2px)"></div>
<div class="a" style="left:21px;top:118px;width:1px;height:8px;background:repeating-linear-gradient(180deg,#808080 0,#808080 1px,transparent 1px,transparent 2px)"></div>
<div class="a" style="left:26px;top:130px;width:6px;height:1px;background:repeating-linear-gradient(90deg,#808080 0,#808080 1px,transparent 1px,transparent 2px)"></div>
<div class="a" style="left:40px;top:138px;width:1px;height:8px;background:repeating-linear-gradient(180deg,#808080 0,#808080 1px,transparent 1px,transparent 2px)"></div>
<div class="a" style="left:45px;top:150px;width:6px;height:1px;background:repeating-linear-gradient(90deg,#808080 0,#808080 1px,transparent 1px,transparent 2px)"></div>
<div class="a" style="left:59px;top:158px;width:1px;height:8px;background:repeating-linear-gradient(180deg,#808080 0,#808080 1px,transparent 1px,transparent 2px)"></div>
<div class="a" style="left:64px;top:170px;width:6px;height:1px;background:repeating-linear-gradient(90deg,#808080 0,#808080 1px,transparent 1px,transparent 2px)"></div>
<div class="a" style="left:78px;top:178px;width:1px;height:8px;background:repeating-linear-gradient(180deg,#808080 0,#808080 1px,transparent 1px,transparent 2px)"></div>
<div class="a" style="left:83px;top:190px;width:6px;height:1px;background:repeating-linear-gradient(90deg,#808080 0,#808080 1px,transparent 1px,transparent 2px)"></div>
<div class="a" style="left:97px;top:198px;width:1px;height:33px;background:repeating-linear-gradient(180deg,#808080 0,#808080 1px,transparent 1px,transparent 2px)"></div>
<div class="a" style="left:97px;top:210px;width:11px;height:1px;background:repeating-linear-gradient(90deg,#808080 0,#808080 1px,transparent 1px,transparent 2px)"></div>
<div class="a" style="left:97px;top:230px;width:11px;height:1px;background:repeating-linear-gradient(90deg,#808080 0,#808080 1px,transparent 1px,transparent 2px)"></div>
<div class="a" style="left:-2px;top:6px;width:9px;height:9px;background:#fff;border:1px solid #808080"></div>
<div class="a" style="left:0px;top:10px;width:5px;height:1px;background:#000"></div>
<div class="a" style="left:2px;top:8px;width:1px;height:5px;background:#000"></div>
<div class="a" style="left:-2px;top:66px;width:9px;height:9px;background:#fff;border:1px solid #808080"></div>
<div class="a" style="left:0px;top:70px;width:5px;height:1px;background:#000"></div>
<div class="a" style="left:-2px;top:106px;width:9px;height:9px;background:#fff;border:1px solid #808080"></div>
<div class="a" style="left:0px;top:110px;width:5px;height:1px;background:#000"></div>
<div class="a" style="left:-2px;top:246px;width:9px;height:9px;background:#fff;border:1px solid #808080"></div>
<div class="a" style="left:0px;top:250px;width:5px;height:1px;background:#000"></div>
<div class="a" style="left:2px;top:248px;width:1px;height:5px;background:#000"></div>
<div class="a" style="left:-2px;top:266px;width:9px;height:9px;background:#fff;border:1px solid #808080"></div>
<div class="a" style="left:0px;top:270px;width:5px;height:1px;background:#000"></div>
<div class="a" style="left:2px;top:268px;width:1px;height:5px;background:#000"></div>
<div class="a" style="left:17px;top:126px;width:9px;height:9px;background:#fff;border:1px solid #808080"></div>
<div class="a" style="left:19px;top:130px;width:5px;height:1px;background:#000"></div>
<div class="a" style="left:36px;top:146px;width:9px;height:9px;background:#fff;border:1px solid #808080"></div>
<div class="a" style="left:38px;top:150px;width:5px;height:1px;background:#000"></div>
<div class="a" style="left:55px;top:166px;width:9px;height:9px;background:#fff;border:1px solid #808080"></div>
<div class="a" style="left:57px;top:170px;width:5px;height:1px;background:#000"></div>
<div class="a" style="left:74px;top:186px;width:9px;height:9px;background:#fff;border:1px solid #808080"></div>
<div class="a" style="left:76px;top:190px;width:5px;height:1px;background:#000"></div>
<svg class="a" style="left:13px;top:2px" width="16" height="16" viewBox="0 0 16 16"><path d="M1.5,4 Q1.5,3 2.5,3 H5.5 L6.5,4.5 H13.5 Q14.5,4.5 14.5,5.5 V14.5 Q14.5,15.5 13.5,15.5 H2.5 Q1.5,15.5 1.5,14.5 Z" fill="#f4c84c" stroke="#a87408" stroke-width="1"/><path d="M2.5,13 H13.5 V14.5 H2.5 Z" fill="#d89c18"/><rect x="4" y="1" width="6" height="10" fill="#333"/><rect x="5" y="2" width="4" height="1.2" fill="#aaa"/><rect x="5" y="4.2" width="4" height="1.2" fill="#aaa"/><circle cx="8.5" cy="8" r=".7" fill="#3f3"/><path d="M7,14 L13,5" stroke="#1c4cd0" stroke-width="2"/><path d="M11.5,3 Q14,1.5 15,4 L13.5,4.5 L12.8,6 Q11,6.5 11.5,3Z" fill="#1c4cd0"/></svg>
<svg class="a" style="left:13px;top:22px" width="16" height="16" viewBox="0 0 16 16"><path d="M1.5,4 Q1.5,3 2.5,3 H5.5 L6.5,4.5 H13.5 Q14.5,4.5 14.5,5.5 V14.5 Q14.5,15.5 13.5,15.5 H2.5 Q1.5,15.5 1.5,14.5 Z" fill="#f4c84c" stroke="#a87408" stroke-width="1"/><path d="M2.5,13 H13.5 V14.5 H2.5 Z" fill="#d89c18"/><rect x="4.5" y="1.5" width="4" height="10" fill="#555"/><rect x="8.5" y="3" width="4.5" height="9" fill="#888" stroke="#444" stroke-width=".6"/><rect x="9.5" y="4" width="1" height="1" fill="#f22"/><rect x="5.5" y="3" width="2" height="1" fill="#bbb"/></svg>
<svg class="a" style="left:13px;top:42px" width="16" height="16" viewBox="0 0 16 16"><circle cx="6" cy="6.5" r="5.5" fill="#2878e8" stroke="#1c50b0" stroke-width=".6"/><path d="M2.1500000000000004,3.75 Q4.9,1.0 7.65,2.6500000000000004 Q6.55,5.95 4.35,7.05 Q3.25,9.8 1.5999999999999996,7.6 Z" fill="#38c838"/><path d="M7.1,7.05 Q10.4,5.4 10.4,8.7 Q8.2,11.45 6.55,9.8 Z" fill="#38c838"/><circle cx="4.075" cy="4.3" r="1.65" fill="#fff" opacity=".45"/><rect x="6.5" y="5.5" width="7" height="9.5" fill="#f8f8f8" stroke="#666" stroke-width=".8"/><path d="M8,8 H12 M8,10 H11 M8,12 H10.5" stroke="#777" stroke-width=".8"/><path d="M10,13 L14.5,7 L15.8,8 L11.5,14 L9.8,14.5Z" fill="#38a838" stroke="#1c6c1c" stroke-width=".4"/></svg>
<svg class="a" style="left:13px;top:62px" width="16" height="16" viewBox="0 0 16 16"><path d="M1.5,4 Q1.5,3 2.5,3 H5.5 L6.5,4.5 H13.5 Q14.5,4.5 14.5,5.5 V14.5 Q14.5,15.5 13.5,15.5 H2.5 Q1.5,15.5 1.5,14.5 Z" fill="#f4c84c" stroke="#a87408" stroke-width="1"/><path d="M2.5,13 H13.5 V14.5 H2.5 Z" fill="#d89c18"/><circle cx="7" cy="5.5" r="4.5" fill="#2878e8" stroke="#1c50b0" stroke-width=".6"/><path d="M3.85,3.25 Q6.1,1.0 8.35,2.35 Q7.45,5.05 5.65,5.95 Q4.75,8.2 3.4,6.4 Z" fill="#38c838"/><path d="M7.9,5.95 Q10.6,4.6 10.6,7.3 Q8.8,9.55 7.45,8.2 Z" fill="#38c838"/><circle cx="5.425" cy="3.7" r="1.3499999999999999" fill="#fff" opacity=".45"/><rect x="6.5" y="7" width="8" height="7" fill="#fff" stroke="#2838d8" stroke-width="1"/><path d="M6.5,9.333333333333334 H14.5 M6.5,11.666666666666668 H14.5 M9.54,7 V14" stroke="#2838d8" stroke-width=".9"/></svg>
<svg class="a" style="left:32px;top:82px" width="16" height="16" viewBox="0 0 16 16"><circle cx="6.5" cy="6" r="5.5" fill="#2878e8" stroke="#1c50b0" stroke-width=".6"/><path d="M2.6500000000000004,3.25 Q5.4,0.5 8.15,2.1500000000000004 Q7.05,5.45 4.85,6.55 Q3.75,9.3 2.0999999999999996,7.1 Z" fill="#38c838"/><path d="M7.6,6.55 Q10.9,4.9 10.9,8.2 Q8.7,10.95 7.05,9.3 Z" fill="#38c838"/><circle cx="4.575" cy="3.8" r="1.65" fill="#fff" opacity=".45"/><rect x="5" y="8" width="10" height="7.5" fill="#fff" stroke="#2838d8" stroke-width="1"/><path d="M5,10.5 H15 M5,13.0 H15 M8.8,8 V15.5" stroke="#2838d8" stroke-width=".9"/></svg>
<svg class="a" style="left:13px;top:102px" width="16" height="16" viewBox="0 0 16 16"><path d="M1.5,8.5 Q1.5,7.5 2.5,7.5 H5 L6,8.5 H14 V15.5 H2.5 Q1.5,15.5 1.5,14.5 Z" fill="#f4cc54" stroke="#a87408" stroke-width="1"/><rect x="7" y="1.5" width="8.5" height="6.5" fill="#a4ecf6" stroke="#555" stroke-width="1"/><path d="M5.5,8.5 H16 V12.5 H7 Z" fill="#303030"/><rect x="3" y="13" width="10.5" height="1.5" fill="#d89c18"/><path d="M1.5,4 L4,2 L10,9.5 L7.5,11.2 Z" fill="#38a838" stroke="#1c6c1c" stroke-width=".5"/><path d="M7.5,11.2 L10,9.5 L10.8,12.3 Z" fill="#f4dcb0"/></svg>
<svg class="a" style="left:32px;top:122px" width="16" height="16" viewBox="0 0 16 16"><path d="M1.5,4 Q1.5,3 2.5,3 H5.5 L6.5,4.5 H13.5 Q14.5,4.5 14.5,5.5 V14.5 Q14.5,15.5 13.5,15.5 H2.5 Q1.5,15.5 1.5,14.5 Z" fill="#f4c84c" stroke="#a87408" stroke-width="1"/><path d="M2.5,13 H13.5 V14.5 H2.5 Z" fill="#d89c18"/><rect x="4" y="1.5" width="3" height="11.5" fill="#e02020" stroke="#801010" stroke-width=".5"/><rect x="7.2" y="1.5" width="3" height="11.5" fill="#f04040" stroke="#801010" stroke-width=".5"/><rect x="10.5" y="2.5" width="2.8" height="10.5" fill="#444" stroke="#111" stroke-width=".5"/><rect x="11.2" y="4" width="1.2" height="1" fill="#ccc"/><rect x="11.2" y="6" width="1.2" height="1" fill="#ccc"/></svg>
<svg class="a" style="left:51px;top:142px" width="16" height="16" viewBox="0 0 16 16"><rect x="7.5" y="1" width="8" height="9" rx="1" fill="#f4f4f8" stroke="#99a" stroke-width=".8"/><path d="M9.5,3 V8 M13.5,3 V8" stroke="#e01010" stroke-width="1.2"/><path d="M11,3.5 Q12.8,5.5 11,7.5" stroke="#e01010" stroke-width="1" fill="none"/><path d="M2,3.5 H7 M2,3.5 L4,1.5 M2,3.5 L4,5.5" stroke="#18a018" stroke-width="1.3" fill="none"/><path d="M3,4 Q2,6 4,7" stroke="#18a018" stroke-width="1.2" fill="none"/><rect x="2" y="7.5" width="6.5" height="8" fill="#444" stroke="#111" stroke-width=".6"/><path d="M3,9.5 H7.5 M3,11.5 H7.5 M3,13.5 H7.5" stroke="#ddd" stroke-width=".9"/></svg>
<svg class="a" style="left:70px;top:162px" width="16" height="16" viewBox="0 0 16 16"><path d="M1.5,8.5 Q1.5,7.5 2.5,7.5 H5 L6,8.5 H14 V15.5 H2.5 Q1.5,15.5 1.5,14.5 Z" fill="#f4cc54" stroke="#a87408" stroke-width="1"/><rect x="7" y="1.5" width="8.5" height="6.5" fill="#a4ecf6" stroke="#555" stroke-width="1"/><path d="M5.5,8.5 H16 V12.5 H7 Z" fill="#303030"/><rect x="3" y="13" width="10.5" height="1.5" fill="#d89c18"/><path d="M1.5,4 L4,2 L10,9.5 L7.5,11.2 Z" fill="#38a838" stroke="#1c6c1c" stroke-width=".5"/><path d="M7.5,11.2 L10,9.5 L10.8,12.3 Z" fill="#f4dcb0"/></svg>
<svg class="a" style="left:89px;top:182px" width="16" height="16" viewBox="0 0 16 16"><path d="M1.5,4 Q1.5,3 2.5,3 H5.5 L6.5,4.5 H13.5 Q14.5,4.5 14.5,5.5 V14.5 Q14.5,15.5 13.5,15.5 H2.5 Q1.5,15.5 1.5,14.5 Z" fill="#f4c84c" stroke="#a87408" stroke-width="1"/><path d="M2.5,13 H13.5 V14.5 H2.5 Z" fill="#d89c18"/><path d="M4.0,1.0 H10.0 L13.0,4.0 V12.0 H4.0 Z" fill="#f4f4f8" stroke="#8890a8" stroke-width="1"/><path d="M10.0,1.0 V4.0 H13.0" fill="#c8d0e0" stroke="#8890a8" stroke-width=".7"/><rect x="4.5" y="5.5" width="8" height="5" fill="#d8d8dc"/><text x="8.5" y="9.3" text-anchor="middle" font-family="Liberation Sans,sans-serif" font-weight="bold" font-size="7" fill="#111" textLength="7" lengthAdjust="spacingAndGlyphs">ST</text></svg>
<svg class="a" style="left:108px;top:202px" width="16" height="16" viewBox="0 0 16 16"><path d="M2.0,1.5 H10.0 L13.0,4.5 V14.5 H2.0 Z" fill="#f4f4f8" stroke="#8890a8" stroke-width="1"/><path d="M10.0,1.5 V4.5 H13.0" fill="#c8d0e0" stroke="#8890a8" stroke-width=".7"/><rect x="2.5" y="6" width="10" height="7" fill="#d8d8dc"/><text x="7.5" y="11.8" text-anchor="middle" font-family="Liberation Sans,sans-serif" font-weight="bold" font-size="7" fill="#111" textLength="9" lengthAdjust="spacingAndGlyphs">ST</text></svg>
<svg class="a" style="left:108px;top:222px" width="16" height="16" viewBox="0 0 16 16"><path d="M3.5,1.5 H11 L13.5,4 V13.5 H3.5 Z" fill="#b8d4f8" stroke="#88a8e0" stroke-width="1"/><path d="M1.5,3.5 H9 V12" fill="none" stroke="#a8c4f0" stroke-width="1"/><rect x="5.5" y="7.5" width="10" height="7.5" fill="#fff" stroke="#2838d8" stroke-width="1"/><path d="M5.5,10.0 H15.5 M5.5,12.5 H15.5 M9.3,7.5 V15.0" stroke="#2838d8" stroke-width=".9"/></svg>
<svg class="a" style="left:13px;top:242px" width="16" height="16" viewBox="0 0 16 16"><path d="M1.5,4 Q1.5,3 2.5,3 H5.5 L6.5,4.5 H13.5 Q14.5,4.5 14.5,5.5 V14.5 Q14.5,15.5 13.5,15.5 H2.5 Q1.5,15.5 1.5,14.5 Z" fill="#f8e088" stroke="#c8a030" stroke-width="1"/><circle cx="5" cy="6" r="2.5" fill="#f08898" opacity=".85"/><rect x="8" y="2" width="5" height="5" fill="#78d878" opacity=".85"/><path d="M10,1 L15,2.5 L13,6Z" fill="#48b848" opacity=".8"/><rect x="3" y="9" width="10" height="5" fill="#f8eca8" opacity=".8"/></svg>
<svg class="a" style="left:13px;top:262px" width="16" height="16" viewBox="0 0 16 16"><path d="M1.5,4 Q1.5,3 2.5,3 H5.5 L6.5,4.5 H13.5 Q14.5,4.5 14.5,5.5 V14.5 Q14.5,15.5 13.5,15.5 H2.5 Q1.5,15.5 1.5,14.5 Z" fill="#f4c84c" stroke="#a87408" stroke-width="1"/><path d="M2.5,13 H13.5 V14.5 H2.5 Z" fill="#d89c18"/><rect x="4" y="2" width="9" height="10" fill="#2c2c2c" stroke="#000" stroke-width=".6"/><path d="M5,1 V3 M12,1 V3" stroke="#000" stroke-width="1.3"/><rect x="8" y="4" width="4" height="3.5" fill="#e82020"/><circle cx="6" cy="9.5" r="2.5" fill="#28b828"/><path d="M8,10 L12,8 L12,12Z" fill="#2858e8"/></svg>
<div class="tree" style="left:34px;top:2.5px">参数</div>
<div class="tree" style="left:34px;top:22.5px">特殊模块(智能功能模块)</div>
<div class="tree" style="left:34px;top:42.5px">全局软元件注释</div>
<div class="tree" style="left:34px;top:62.5px">全局标签</div>
<div class="tree" style="left:53px;top:82.5px"><span style="letter-spacing:.3px">Global1</span></div>
<div class="tree" style="left:34px;top:102.5px">程序设置</div>
<div class="tree" style="left:53px;top:122.5px">执行程序</div>
<div class="tree" style="left:72px;top:142.5px"><span style="letter-spacing:.6px">MAIN</span></div>
<div class="tree" style="left:91px;top:162.5px">Task_01</div>
<div class="tree" style="left:110px;top:182.5px">PP</div>
<div class="tree" style="left:129px;top:202.5px">程序本体</div>
<div class="tree" style="left:129px;top:222.5px">局部标签</div>
<div class="tree" style="left:34px;top:242.5px">程序部件</div>
<div class="tree" style="left:34px;top:262.5px">软元件存储器</div>
</div>
<svg class="a" style="left:-3px;top:159px" width="16" height="16" viewBox="0 0 16 16"><path d="M0.5,5.5 H12.5 V15.5 H0.5 Z" fill="#fff" stroke="#444" stroke-width="1"/><path d="M12.5,0.5 H15.5 V3 H18 V6 H15.5 V8.5 H12.5 V6 H10 V3 H12.5 Z" fill="#ff9000" stroke="#c05000" stroke-width=".6"/></svg>
<svg class="a" style="left:22px;top:161px" width="16" height="16" viewBox="0 0 16 16"><path d="M0.5,1.5 H5 L7,3.5 V9.5 H0.5 Z" fill="#f4f4fa" stroke="#9c9cc0"/><path d="M5.5,5.5 H10 L12.5,8 V14.5 H5.5 Z" fill="#f4f4fa" stroke="#9c9cc0"/><path d="M7,9 H11 M7,11 H11 M7,12.8 H11" stroke="#9c9cc0" stroke-width=".8"/></svg>
<svg class="a" style="left:44px;top:160px" width="16" height="16" viewBox="0 0 16 16"><rect x="0.5" y="3.5" width="11" height="10" fill="#f4f4fa" stroke="#9c9cc0"/><rect x="3.5" y="1.5" width="5" height="3" fill="#f4f4fa" stroke="#9c9cc0"/><path d="M6.5,8.5 H11 L13.5,11 V15.5 H6.5 Z" fill="#f4f4fa" stroke="#9c9cc0"/><path d="M8,11.5 H12 M8,13.5 H12" stroke="#9c9cc0" stroke-width=".8"/></svg>
<svg class="a" style="left:66px;top:158px" width="16" height="16" viewBox="0 0 16 16"><path d="M0.5,0.5 H5.5 L8.5,3.5 V10.5 H0.5 Z" fill="#fff" stroke="#444" stroke-width="1"/><path d="M2,3 H4.5 M2,5 H6.5 M2,7 H5" stroke="#666" stroke-width=".8"/><circle cx="10.5" cy="11.5" r="4.3" fill="#1868d8" stroke="#0c3c98" stroke-width=".7"/><rect x="9.8" y="10.8" width="1.6" height="3.6" fill="#fff"/><rect x="9.8" y="8.6" width="1.6" height="1.5" fill="#fff"/></svg>
<svg class="a" style="left:89px;top:160px" width="16" height="16" viewBox="0 0 16 16"><path d="M0.5,0.5 H8.5 L11.5,3.5 V14.5 H0.5 Z" fill="#cce0fc" stroke="#5888d0" stroke-width="1"/><path d="M3,6 Q6,2 9,6 L10,4.5 V8 H6.5 L8,7 Q6,4.5 4,7Z" fill="#18a828"/><path d="M9,9 Q6,13 3,9 L2,10.5 V7 H5.5 L4,8 Q6,10.5 8,8Z" fill="#18a828"/></svg>
<div class="sep" style="left:108px;top:160px"></div>
<svg class="a" style="left:115px;top:158px" width="16" height="16" viewBox="0 0 16 16"><path d="M0,9 L5,1 H11 V9Z" fill="#777"/><path d="M5,1 L5.5,9 H0Z" fill="#555"/><path d="M3,9 H9 L8,11 H4Z" fill="#444"/><rect x="7" y="7.5" width="3" height="8.5" fill="#e82020"/><rect x="10" y="4.5" width="4" height="11.5" fill="#333"/><rect x="10.8" y="6" width="1.2" height="8" fill="#ddd"/><circle cx="13" cy="7" r=".6" fill="#3f3"/></svg>
<svg class="a" style="left:132px;top:168px" width="5" height="3" viewBox="0 0 5 3"><path d="M0,0 H5 L2.5,3 Z" fill="#000"/></svg>
<div class="sb" style="left:0;top:500px;width:172px;height:17px"></div>
<div class="a" style="left:0;top:517px;width:172px;height:7px;background:linear-gradient(180deg,#b0b0cc,#9090b4)"></div>
<div class="nb" style="top:524px;background:linear-gradient(180deg,#ffe6a4 0,#fccc6c 45%,#f8b040 58%,#f09a24 100%);border-bottom:1px solid #7c7ca0"></div>
<div class="nb" style="top:556px;background:linear-gradient(180deg,#e6e6f2 0,#c6c6dc 50%,#9c9cbe 100%);border-bottom:1px solid #7c7ca0"></div>
<div class="nb" style="top:588px;background:linear-gradient(180deg,#e6e6f2 0,#c6c6dc 50%,#9c9cbe 100%);border-bottom:1px solid #7c7ca0"></div>
<div class="nb" style="top:620px;height:33px;background:linear-gradient(180deg,#e6e6f2 0,#c6c6dc 50%,#9c9cbe 100%)"></div>
<div class="t" style="left:28px;top:532px;font-weight:bold;font-size:12px">工程</div>
<div class="t" style="left:28px;top:564px;font-weight:bold;font-size:12px">用户库</div>
<div class="t" style="left:28px;top:596px;font-weight:bold;font-size:12px">连接目标</div>
<div class="a" style="left:177px;top:103px;width:1255px;height:24px;background:linear-gradient(180deg,#ededf4,#fdfdfe)"></div>
<div class="a" style="left:177px;top:127px;width:1255px;height:526px;background:#3c64ac"></div>
<div class="a" style="left:178px;top:128px;width:1254px;height:524px;background:#fbc47c"></div>
<div class="a" style="left:180px;top:129px;width:1250.6px;height:521.5px;background:#fff"></div>
<div class="a" style="left:180px;top:129px;width:1249px;height:520px;background:#f0f0f0;border-top:2px solid #696969;border-left:1px solid #a0a0a0"></div>
<div class="a" style="left:200px;top:131px;width:603px;height:501px;background:#fff"></div>
<div class="a" style="left:803px;top:130px;width:5px;height:519px;background:linear-gradient(90deg,#fff,#ececec)"></div>
<div class="a" style="left:808px;top:130px;width:2px;height:519px;background:#696969"></div>
<div class="a" style="left:829px;top:131px;width:583px;height:501px;background:#fff"></div>
<div class="a" style="left:262px;top:257px;width:41px;height:18px;background:#0000f4"></div>
<div class="a" style="left:238px;top:329px;width:41px;height:18px;background:#0000f4"></div>
<div class="a" style="left:268px;top:455px;width:41px;height:18px;background:#0000f4"></div>
<div class="a" style="left:214px;top:131px;width:18px;height:18px;border:1px solid #0000ff"></div>
<div class="a" style="left:246px;top:149px;width:18px;height:18px;border:1px solid #0000ff"></div>
<div class="a" style="left:246px;top:167px;width:18px;height:18px;border:1px solid #0000ff"></div>
<div class="a" style="left:214px;top:401px;width:18px;height:18px;border:1px solid #0000ff"></div>
<div class="code k" style="left:201px;top:133px">IF</div>
<div class="code " style="left:215px;top:133px">X3</div>
<div class="code k" style="left:234px;top:133px">THEN</div>
<div class="code " style="left:201px;top:151px">MOVP(</div>
<div class="code " style="left:247px;top:151px">X3</div>
<div class="code " style="left:265px;top:151px">0,<span class="v">W1</span>);</div>
<div class="code " style="left:201px;top:169px">MOVP(</div>
<div class="code " style="left:247px;top:169px">X3</div>
<div class="code " style="left:265px;top:169px">0,<span class="v">W2</span>);</div>
<div class="code k" style="left:201px;top:403px">IF</div>
<div class="code " style="left:215px;top:403px">X0</div>
<div class="code k" style="left:237px;top:403px">THEN</div>
<div class="code" style="left:204px;top:187px"><span class="k">IF </span><span class="v">W1</span>&lt;=99 <span class="k">THEN</span>;</div>
<div class="code" style="left:213px;top:223px"><span class="k">FOR  </span><span class="v">W1</span>:= 0 <span class="k">TO</span> 99  <span class="k">BY</span> 1 <span class="k">DO</span></div>
<div class="code" style="left:237px;top:241px"><span class="v">W2</span>:= <span class="v">W2</span>+2;</div>
<div class="code" style="left:237px;top:259px">INC(<span class="sel">M8000</span>,D19);</div>
<div class="code" style="left:237px;top:277px">D20:=D20+D19;</div>
<div class="code" style="left:213px;top:313px"><span class="k">END<span class="us">_</span>FOR</span>;</div>
<div class="code" style="left:213px;top:331px">INC(<span class="sel">M8000</span>,D10);</div>
<div class="code" style="left:201px;top:349px"><span class="k">END<span class="us">_</span>IF</span>;</div>
<div class="code" style="left:201px;top:385px"><span class="k">END<span class="us">_</span>IF</span>;</div>
<div class="code" style="left:201px;top:421px"><span class="k">WHILE </span><span class="v">W3</span>&lt;10000 <span class="k">DO</span></div>
<div class="code" style="left:243px;top:439px"><span class="v">W3</span>:=<span class="v">W3</span>*2+1;</div>
<div class="code" style="left:243px;top:457px">INC(<span class="sel">M8000</span>,D9);</div>
<div class="code" style="left:201px;top:475px"><span class="k">END<span class="us">_</span>WHILE</span>;</div>
<div class="code" style="left:201px;top:493px"><span class="g">(*ELSE</span></div>
<div class="code" style="left:201px;top:511px"><span class="g">W1:=0;*)</span></div>
<div class="code" style="left:201px;top:529px"><span class="k">END<span class="us">_</span>IF</span>;</div>
<div class="mon" style="left:830px;top:149px">W1 = <b style="margin-right:-2.95px">100</b></div>
<div class="mon" style="left:830px;top:167px">W2 = <b style="margin-right:-2.95px">200</b></div>
<div class="mon" style="left:830px;top:185px">W1 = <b style="margin-right:-2.95px">100</b></div>
<div class="mon" style="left:830px;top:221px">W1 = <b style="margin-right:-2.95px">100</b></div>
<div class="mon" style="left:830px;top:239px">W2 = <b style="margin-right:-2.95px">200</b>; W2 = <b style="margin-right:-2.95px">200</b></div>
<div class="mon" style="left:830px;top:257px">D19 = <b style="margin-right:-2.95px">100</b></div>
<div class="mon" style="left:830px;top:275px">D20 = <b style="margin-right:-3.93px">5050</b>; D20 = <b style="margin-right:-3.93px">5050</b>; D19 = <b style="margin-right:-2.95px">100</b></div>
<div class="mon" style="left:830px;top:328px">D10 = <b style="margin-right:-0.98px">1</b></div>
<div class="mon" style="left:830px;top:418px">W3 = <b style="margin-right:-0.98px">0</b></div>
<div class="mon" style="left:830px;top:436px">W3 = <b style="margin-right:-0.98px">0</b>; W3 = <b style="margin-right:-0.98px">0</b></div>
<div class="mon" style="left:830px;top:454px">D9 = <b style="margin-right:-0.98px">0</b></div>
<div class="a" style="left:12px;top:501px;width:138px;height:15px;border:1px solid #98989c;border-radius:2px;background:linear-gradient(180deg,#f6f6f6 0,#e8e8ea 45%,#d4d4d8 55%,#dcdce0 100%)"></div>
<div class="a" style="left:76px;top:505px;width:7px;height:7px;background:repeating-linear-gradient(90deg,#505860 0,#505860 1px,transparent 1px,transparent 3px)"></div>
<svg class="a" style="left:1px;top:505px" width="4" height="7" viewBox="0 0 4 7"><path d="M4,0 V7 L0,3.5 Z" fill="#404040"/></svg>
<svg class="a" style="left:162px;top:505px" width="4" height="7" viewBox="0 0 4 7"><path d="M0,0 V7 L4,3.5 Z" fill="#404040"/></svg>
<div class="a" style="left:66px;top:519px;width:34px;height:2px;background:repeating-linear-gradient(90deg,#fff 0,#fff 2px,transparent 2px,transparent 4px)"></div>
<div class="a" style="left:65px;top:518px;width:34px;height:2px;background:repeating-linear-gradient(90deg,#3c3c6c 0,#3c3c6c 2px,transparent 2px,transparent 4px)"></div>
<svg class="a" style="left:0px;top:528px" width="24" height="26" viewBox="0 0 24 26"><path d="M0,18 L8,3 L17,1 V17 Z" fill="#8c8c94"/><path d="M8,3 L9,18 L0,18Z" fill="#606068"/><path d="M4,18 H14 L12,22 H6Z" fill="#444"/><rect x="10" y="13" width="6" height="11" fill="#e82418"/><rect x="15" y="9" width="8" height="15" fill="#3c3c3c"/><rect x="19" y="11" width="3" height="12" fill="#c8c8c8"/><path d="M19,13 H22 M19,15 H22 M19,17 H22 M19,19 H22 M19,21 H22" stroke="#444" stroke-width=".8"/><circle cx="17" cy="12" r=".9" fill="#4f4"/></svg>
<svg class="a" style="left:0px;top:561px" width="24" height="26" viewBox="0 0 24 26"><path d="M0,3 Q6,0 11,4 Q15,0 20,3 V17 Q15,15 11,19 Q6,15 0,17Z" fill="#f0e8d8" stroke="#a89878" stroke-width=".8"/><path d="M11,4 V19" stroke="#a89878" stroke-width=".8"/><path d="M2,6 Q6,4 9.5,7 M2,9 Q6,7 9.5,10 M2,12 Q6,10 9.5,13 M12.5,7 Q16,4 19,6 M12.5,10 Q16,7 19,9" stroke="#b8a888" stroke-width=".7" fill="none"/><path d="M15,22 V14 L17,9 L19,10 L18.5,14 L22.5,15 Q24,18 22,22Z" fill="#f0c838" stroke="#b08810" stroke-width=".7"/><rect x="14.5" y="22" width="8" height="3.5" fill="#58b848"/></svg>
<svg class="a" style="left:0px;top:592px" width="24" height="28" viewBox="0 0 24 28"><path d="M3,8 H0.8 V21.5 H14" fill="none" stroke="#18a028" stroke-width="1.6"/><path d="M3,3.5 L15,1 V12 L3,14Z" fill="#38b8f0" stroke="#444" stroke-width="1"/><path d="M4,4.5 L9,3.5 V8 L4,9Z" fill="#a8e4fc" opacity=".8"/><path d="M2,15 L14,13 L16,16 L4,18.5Z" fill="#888" stroke="#444" stroke-width=".6"/><rect x="14" y="7" width="9" height="19" fill="#2c2c2c"/><rect x="15" y="9" width="7" height="1.4" fill="#bbb"/><rect x="15" y="12" width="7" height="1.4" fill="#bbb"/><rect x="15" y="21" width="7" height="1.2" fill="#888"/><circle cx="21" cy="17" r=".9" fill="#4f4"/></svg>
<svg class="a" style="left:157px;top:634px" width="7" height="12" viewBox="0 0 7 12"><path d="M0.5,0.5 L3,3 L0.5,5.5 M3.5,0.5 L6,3 L3.5,5.5" stroke="#000" stroke-width="1" fill="none"/><path d="M1,9 H6 L3.5,11.5Z" fill="#000"/></svg>
<svg class="a" style="left:170px;top:100px" width="540" height="32" viewBox="170 100 540 32"><defs><linearGradient id="ga" x1="0" y1="0" x2="0" y2="1"><stop offset="0" stop-color="#fff4e2"/><stop offset=".35" stop-color="#ffe0b4"/><stop offset="1" stop-color="#ffbe74"/></linearGradient><linearGradient id="gi" x1="0" y1="0" x2="0" y2="1"><stop offset="0" stop-color="#fcfcfe"/><stop offset="1" stop-color="#dadaea"/></linearGradient></defs><path d="M533.5,127.5 V108 L536,105.5 H692 Q694.5,105.5 694.5,108 V127.5 Z" fill="url(#gi)" stroke="#1c48b0" stroke-width="1"/><path d="M395.5,127.5 V108 L398,105.5 H531 Q533.5,105.5 533.5,108 V127.5 Z" fill="url(#gi)" stroke="#1c48b0" stroke-width="1"/><path d="M177.5,129 V127.5 L182,126.5 L204,105.5 H392 Q395.5,105.5 395.5,109 V129 Z" fill="url(#ga)"/><path d="M177.5,128 L182,126.5 L204,105.5 H392 Q395.5,105.5 395.5,109 V127" fill="none" stroke="#2c5aa4" stroke-width="1"/></svg>
<svg class="a" style="left:209px;top:109px" width="14" height="16" viewBox="0 0 14 16"><path d="M1.0,1.0 H9.0 L12.0,4.0 V14.5 H1.0 Z" fill="#f4f4f8" stroke="#8890a8" stroke-width="1"/><path d="M9.0,1.0 V4.0 H12.0" fill="#c8d0e0" stroke="#8890a8" stroke-width=".7"/><rect x="1.5" y="5.5" width="10" height="7.5" fill="#d8d8dc"/><text x="6.5" y="11.8" text-anchor="middle" font-family="Liberation Sans,sans-serif" font-weight="bold" font-size="7" fill="#111" textLength="9" lengthAdjust="spacingAndGlyphs">ST</text></svg>
<div class="t" id="tab1" style="margin-top:1px;left:227px;top:108px;font-weight:bold;font-size:12px;letter-spacing:.23px">PP [PRG] 程序本体 [ST]</div>
<div class="a" style="left:375px;top:108px;width:16px;height:16px;background:#fffdf4;border:1px solid;border-color:#e8e0cc #bcb094 #bcb094 #e8e0cc"></div>
<svg class="a" style="left:379px;top:112px" width="8" height="8" viewBox="0 0 8 8"><path d="M1,1 L7,7 M7,1 L1,7" stroke="#aca08c" stroke-width="1.8"/></svg>
<svg class="a" style="left:404px;top:109px" width="16" height="16" viewBox="0 0 16 16"><path d="M1.5,8.5 Q1.5,7.5 2.5,7.5 H5 L6,8.5 H14 V15.5 H2.5 Q1.5,15.5 1.5,14.5 Z" fill="#f4cc54" stroke="#a87408" stroke-width="1"/><rect x="7" y="1.5" width="8.5" height="6.5" fill="#a4ecf6" stroke="#555" stroke-width="1"/><path d="M5.5,8.5 H16 V12.5 H7 Z" fill="#303030"/><rect x="3" y="13" width="10.5" height="1.5" fill="#d89c18"/><path d="M1.5,4 L4,2 L10,9.5 L7.5,11.2 Z" fill="#38a838" stroke="#1c6c1c" stroke-width=".5"/><path d="M7.5,11.2 L10,9.5 L10.8,12.3 Z" fill="#f4dcb0"/></svg>
<div class="t" id="tab2" style="margin-top:1px;left:423px;top:108px;font-size:12px">任务登录 <span style="letter-spacing:.3px">Task_01</span></div>
<svg class="a" style="left:542px;top:108px" width="16" height="16" viewBox="0 0 16 16"><circle cx="6.5" cy="6" r="5.5" fill="#2878e8" stroke="#1c50b0" stroke-width=".6"/><path d="M2.6500000000000004,3.25 Q5.4,0.5 8.15,2.1500000000000004 Q7.05,5.45 4.85,6.55 Q3.75,9.3 2.0999999999999996,7.1 Z" fill="#38c838"/><path d="M7.6,6.55 Q10.9,4.9 10.9,8.2 Q8.7,10.95 7.05,9.3 Z" fill="#38c838"/><circle cx="4.575" cy="3.8" r="1.65" fill="#fff" opacity=".45"/><rect x="5" y="8" width="10" height="7.5" fill="#fff" stroke="#2838d8" stroke-width="1"/><path d="M5,10.5 H15 M5,13.0 H15 M8.8,8 V15.5" stroke="#2838d8" stroke-width=".9"/></svg>
<div class="t" id="tab3" style="margin-top:1px;left:561px;top:108px;font-size:12px">全局标签设置 <span style="letter-spacing:.55px">Global1</span></div>
<svg class="a" style="left:1387px;top:110px" width="6" height="9" viewBox="0 0 6 9"><path d="M4.5,0.5 V8.5 L0.5,4.5 Z" fill="none" stroke="#000" stroke-width="1"/></svg>
<svg class="a" style="left:1404px;top:110px" width="6" height="9" viewBox="0 0 6 9"><path d="M0.5,0.5 V8.5 L4.5,4.5 Z" fill="none" stroke="#000" stroke-width="1"/></svg>
<svg class="a" style="left:1419px;top:115px" width="8" height="4" viewBox="0 0 8 4"><path d="M0,0 H8 L4,4 Z" fill="#000"/></svg>
<div class="sb" style="left:181px;top:632px;width:622px;height:17px"></div>
<div class="btn" style="left:181px;top:632px;width:17px;height:17px"></div>
<svg class="a" style="left:186px;top:637px" width="4" height="7" viewBox="0 0 4 7"><path d="M4,0 V7 L0,3.5 Z" fill="#000"/></svg>
<div class="btn" style="left:198px;top:632px;width:588px;height:17px"></div>
<div class="btn" style="left:786px;top:632px;width:17px;height:17px"></div>
<svg class="a" style="left:793px;top:637px" width="4" height="7" viewBox="0 0 4 7"><path d="M0,0 V7 L4,3.5 Z" fill="#000"/></svg>
<div class="sb" style="left:810px;top:632px;width:602px;height:17px"></div>
<div class="btn" style="left:810px;top:632px;width:17px;height:17px"></div>
<svg class="a" style="left:815px;top:637px" width="4" height="7" viewBox="0 0 4 7"><path d="M4,0 V7 L0,3.5 Z" fill="#000"/></svg>
<div class="btn" style="left:827px;top:632px;width:568px;height:17px"></div>
<div class="btn" style="left:1395px;top:632px;width:17px;height:17px"></div>
<svg class="a" style="left:1402px;top:637px" width="4" height="7" viewBox="0 0 4 7"><path d="M0,0 V7 L4,3.5 Z" fill="#000"/></svg>
<div class="sb" style="left:1412px;top:131px;width:17px;height:518px"></div>
<div class="a" style="left:1412px;top:131px;width:17px;height:4px;background:#000"></div>
<div class="btn" style="left:1412px;top:135px;width:17px;height:16px"></div>
<svg class="a" style="left:1417px;top:141px" width="7" height="4" viewBox="0 0 7 4"><path d="M0,4 H7 L3.5,0 Z" fill="#000"/></svg>
<div class="btn" style="left:1412px;top:151px;width:17px;height:463px"></div>
<div class="btn" style="left:1412px;top:615px;width:17px;height:17px"></div>
<svg class="a" style="left:1417px;top:622px" width="7" height="4" viewBox="0 0 7 4"><path d="M0,0 H7 L3.5,4 Z" fill="#000"/></svg>
<div class="a" style="left:250px;top:512px;width:1px;height:16px;background:#000"></div>
<div class="a" style="left:173px;top:653px;width:1259px;height:2px;background:#dcdcec"></div>
<div class="a" style="left:0;top:653px;width:173px;height:2px;background:#dcdcec"></div>
</body></html>
